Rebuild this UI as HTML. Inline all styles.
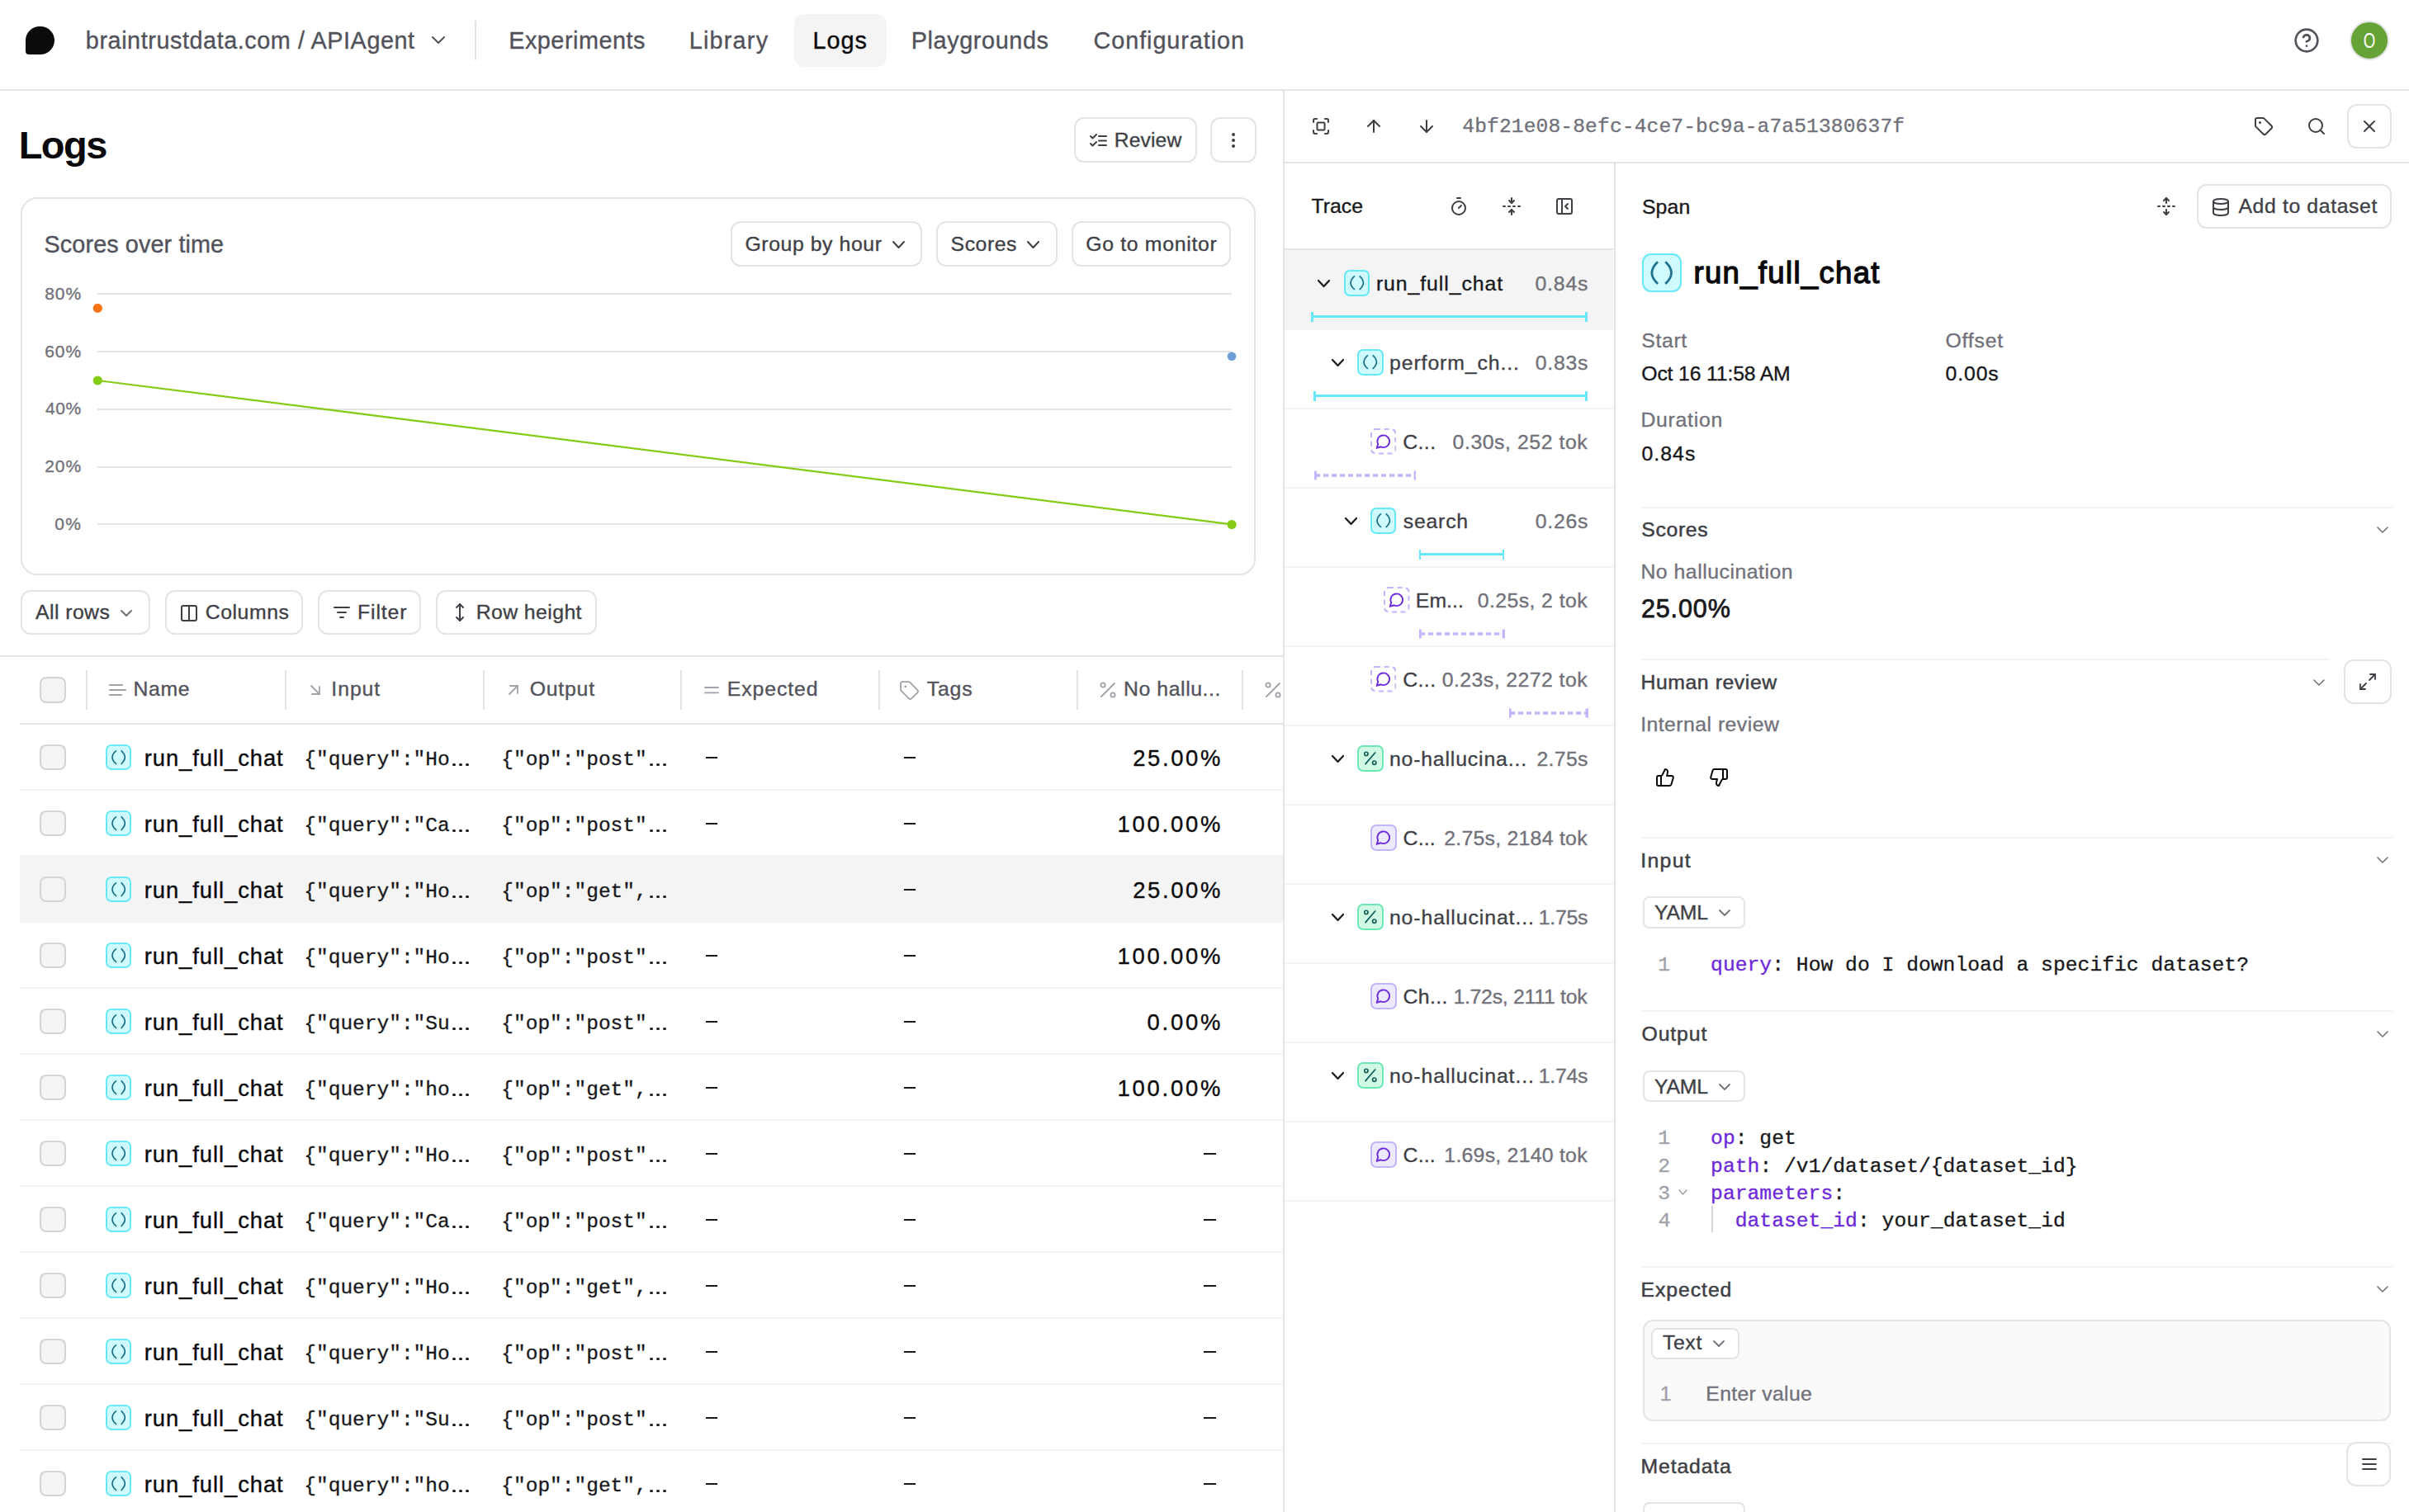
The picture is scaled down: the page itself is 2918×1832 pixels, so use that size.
<!DOCTYPE html><html><head><meta charset="utf-8"><style>
html,body{margin:0;padding:0}
body{width:2918px;height:1832px;overflow:hidden;position:relative;background:#fff;font-family:"Liberation Sans",sans-serif}
body>div,body>svg{position:absolute;box-sizing:border-box}
.t{white-space:nowrap}
</style></head><body>
<div style="left:31px;top:32px;width:35px;height:34px;background:#0b0b0b;border-radius:17px 17px 17px 4px"></div>
<div class="t" style="left:103.83px;top:34.52px;font-family:'Liberation Sans', sans-serif;font-size:28.8px;line-height:28.8px;font-weight:400;color:#52525b;letter-spacing:0.561px;-webkit-text-stroke:0.35px #52525b;">braintrustdata.com / APIAgent</div>
<svg style="left:520px;top:40px;width:22px;height:18px;" viewBox="0 0 22 18" fill="none" stroke="#52525b" stroke-width="2" stroke-linecap="round" stroke-linejoin="round"><path d="M4 5 L11 12 L18 5"/></svg>
<div style="left:575px;top:25px;width:2px;height:48px;background:#e4e4e7"></div>
<div style="left:962px;top:17px;width:112px;height:64px;background:#f4f4f5;border-radius:12px"></div>
<div class="t" style="left:616.20px;top:34.52px;font-family:'Liberation Sans', sans-serif;font-size:28.8px;line-height:28.8px;font-weight:400;color:#52525b;letter-spacing:0.518px;-webkit-text-stroke:0.35px #52525b;">Experiments</div>
<div class="t" style="left:834.70px;top:34.52px;font-family:'Liberation Sans', sans-serif;font-size:28.8px;line-height:28.8px;font-weight:400;color:#52525b;letter-spacing:1.220px;-webkit-text-stroke:0.35px #52525b;">Library</div>
<div class="t" style="left:984.50px;top:34.52px;font-family:'Liberation Sans', sans-serif;font-size:28.8px;line-height:28.8px;font-weight:400;color:#09090b;letter-spacing:1.005px;-webkit-text-stroke:0.35px #09090b;">Logs</div>
<div class="t" style="left:1103.70px;top:34.52px;font-family:'Liberation Sans', sans-serif;font-size:28.8px;line-height:28.8px;font-weight:400;color:#52525b;letter-spacing:0.618px;-webkit-text-stroke:0.35px #52525b;">Playgrounds</div>
<div class="t" style="left:1324.56px;top:34.52px;font-family:'Liberation Sans', sans-serif;font-size:28.8px;line-height:28.8px;font-weight:400;color:#52525b;letter-spacing:0.925px;-webkit-text-stroke:0.35px #52525b;">Configuration</div>
<svg style="left:2778px;top:33px;width:32px;height:32px;" viewBox="0 0 24 24" fill="none" stroke="#52525b" stroke-width="2" stroke-linecap="round" stroke-linejoin="round"><circle cx="12" cy="12" r="10"/><path d="M9.09 9a3 3 0 0 1 5.83 1c0 2-3 3-3 3"/><path d="M12 17h.01"/></svg>
<div style="left:2846px;top:25px;width:48px;height:48px;background:#66a336;border-radius:50%;border:2px solid #e4e4e7"></div>
<div class="t" style="left:2857px;top:36px;width:26px;text-align:center;font-size:26px;line-height:26px;color:#fff;transform:scaleX(0.72)">O</div>
<div style="left:0px;top:108px;width:2918px;height:2px;background:#e4e4e7"></div>
<div class="t" style="left:22.64px;top:152.05px;font-family:'Liberation Sans', sans-serif;font-size:47px;line-height:47px;font-weight:700;color:#09090b;letter-spacing:-1.465px;">Logs</div>
<div style="left:1300.5px;top:142.4px;width:149.0px;height:55.099999999999994px;border:2px solid #e4e4e7;border-radius:12px;background:#fff"></div>
<svg style="left:1318px;top:159px;width:24px;height:22px;" viewBox="0 0 24 22" fill="none" stroke="#3f3f46" stroke-width="2" stroke-linecap="round" stroke-linejoin="round"><path d="M3 6 L5.5 8.5 L10 4"/><path d="M3 15 L5.5 17.5 L10 13"/><path d="M13 6h9"/><path d="M13 11.5h9"/><path d="M13 17h9"/></svg>
<div class="t" style="left:1349.73px;top:157.99px;font-family:'Liberation Sans', sans-serif;font-size:24.6px;line-height:24.6px;font-weight:400;color:#3f3f46;letter-spacing:0.156px;-webkit-text-stroke:0.35px #3f3f46;">Review</div>
<div style="left:1466.2px;top:142.4px;width:55.399999999999864px;height:55.099999999999994px;border:2px solid #e4e4e7;border-radius:12px;background:#fff"></div>
<div style="left:1491.6px;top:160.5px;width:4.6px;height:4.6px;background:#3f3f46;border-radius:50%"></div>
<div style="left:1491.6px;top:167.5px;width:4.6px;height:4.6px;background:#3f3f46;border-radius:50%"></div>
<div style="left:1491.6px;top:174.6px;width:4.6px;height:4.6px;background:#3f3f46;border-radius:50%"></div>
<div style="left:24.5px;top:238.5px;width:1496.3px;height:458px;border:2px solid #e4e4e7;border-radius:20px"></div>
<div class="t" style="left:53.50px;top:281.92px;font-family:'Liberation Sans', sans-serif;font-size:28.8px;line-height:28.8px;font-weight:400;color:#52525b;letter-spacing:0.106px;-webkit-text-stroke:0.35px #52525b;">Scores over time</div>
<div style="left:885.4px;top:268.3px;width:232.0000000000001px;height:55.099999999999966px;border:2px solid #e4e4e7;border-radius:12px;background:#fff"></div>
<div class="t" style="left:902.46px;top:283.92px;font-family:'Liberation Sans', sans-serif;font-size:24.8px;line-height:24.8px;font-weight:400;color:#3f3f46;letter-spacing:0.578px;-webkit-text-stroke:0.35px #3f3f46;">Group by hour</div>
<svg style="left:1079.8px;top:290.5px;width:17px;height:11px;" viewBox="0 0 17 11" fill="none" stroke="#3f3f46" stroke-width="2" stroke-linecap="round" stroke-linejoin="round"><path d="M2 2 L8.5 9 L15 2"/></svg>
<div style="left:1134.3px;top:268.3px;width:147.10000000000014px;height:55.099999999999966px;border:2px solid #e4e4e7;border-radius:12px;background:#fff"></div>
<div class="t" style="left:1151.58px;top:283.92px;font-family:'Liberation Sans', sans-serif;font-size:24.8px;line-height:24.8px;font-weight:400;color:#3f3f46;letter-spacing:0.551px;-webkit-text-stroke:0.35px #3f3f46;">Scores</div>
<svg style="left:1243.1px;top:290.5px;width:17px;height:11px;" viewBox="0 0 17 11" fill="none" stroke="#3f3f46" stroke-width="2" stroke-linecap="round" stroke-linejoin="round"><path d="M2 2 L8.5 9 L15 2"/></svg>
<div style="left:1298.3px;top:268.3px;width:193.10000000000014px;height:55.099999999999966px;border:2px solid #e4e4e7;border-radius:12px;background:#fff"></div>
<div class="t" style="left:1315.16px;top:283.92px;font-family:'Liberation Sans', sans-serif;font-size:24.8px;line-height:24.8px;font-weight:400;color:#3f3f46;letter-spacing:0.696px;-webkit-text-stroke:0.35px #3f3f46;">Go to monitor</div>
<div style="left:118px;top:355.0px;width:1374px;height:2px;background:#e4e4e7"></div>
<div class="t" style="left:54.35px;top:344.65px;font-family:'Liberation Sans', sans-serif;font-size:21px;line-height:21px;font-weight:400;color:#71717a;letter-spacing:0.840px;-webkit-text-stroke:0.35px #71717a;">80%</div>
<div style="left:118px;top:424.85px;width:1374px;height:2px;background:#e4e4e7"></div>
<div class="t" style="left:54.25px;top:414.50px;font-family:'Liberation Sans', sans-serif;font-size:21px;line-height:21px;font-weight:400;color:#71717a;letter-spacing:0.893px;-webkit-text-stroke:0.35px #71717a;">60%</div>
<div style="left:118px;top:494.7px;width:1374px;height:2px;background:#e4e4e7"></div>
<div class="t" style="left:54.88px;top:484.35px;font-family:'Liberation Sans', sans-serif;font-size:21px;line-height:21px;font-weight:400;color:#71717a;letter-spacing:0.578px;-webkit-text-stroke:0.35px #71717a;">40%</div>
<div style="left:118px;top:564.55px;width:1374px;height:2px;background:#e4e4e7"></div>
<div class="t" style="left:54.25px;top:554.20px;font-family:'Liberation Sans', sans-serif;font-size:21px;line-height:21px;font-weight:400;color:#71717a;letter-spacing:0.893px;-webkit-text-stroke:0.35px #71717a;">20%</div>
<div style="left:118px;top:634.4px;width:1374px;height:2px;background:#e4e4e7"></div>
<div class="t" style="left:66.16px;top:624.05px;font-family:'Liberation Sans', sans-serif;font-size:21px;line-height:21px;font-weight:400;color:#71717a;letter-spacing:1.530px;-webkit-text-stroke:0.35px #71717a;">0%</div>
<svg style="left:0px;top:0px;width:1600px;height:700px;" viewBox="0 0 1600 700" fill="none" stroke="none" stroke-width="0" stroke-linecap="round" stroke-linejoin="round"><line x1="118.3" y1="461" x2="1492" y2="635.4" stroke="#84cc16" stroke-width="2.2"/><circle cx="118.3" cy="373.4" r="5.6" fill="#f97316" stroke="none"/><circle cx="118.3" cy="461" r="5.6" fill="#84cc16" stroke="none"/><circle cx="1492" cy="635.5" r="5.6" fill="#84cc16" stroke="none"/><circle cx="1492" cy="431.8" r="5.3" fill="#6c9fd6" stroke="none"/></svg>
<div style="left:24.6px;top:714.6px;width:157.70000000000002px;height:54.39999999999998px;border:2px solid #e4e4e7;border-radius:12px;background:#fff"></div>
<div class="t" style="left:43.00px;top:730.12px;font-family:'Liberation Sans', sans-serif;font-size:24.8px;line-height:24.8px;font-weight:400;color:#3f3f46;letter-spacing:0.438px;-webkit-text-stroke:0.35px #3f3f46;">All rows</div>
<svg style="left:145.0px;top:737.5px;width:16px;height:10px;" viewBox="0 0 16 10" fill="none" stroke="#71717a" stroke-width="2" stroke-linecap="round" stroke-linejoin="round"><path d="M2 2 L8.0 8 L14 2"/></svg>
<div style="left:199.8px;top:714.6px;width:167.09999999999997px;height:54.39999999999998px;border:2px solid #e4e4e7;border-radius:12px;background:#fff"></div>
<svg style="left:217px;top:730.5px;width:24px;height:24px;" viewBox="0 0 24 24" fill="none" stroke="#3f3f46" stroke-width="2" stroke-linecap="round" stroke-linejoin="round"><rect x="3" y="3" width="18" height="18" rx="2"/><path d="M12 3v18"/></svg>
<div class="t" style="left:248.76px;top:730.12px;font-family:'Liberation Sans', sans-serif;font-size:24.8px;line-height:24.8px;font-weight:400;color:#3f3f46;letter-spacing:0.545px;-webkit-text-stroke:0.35px #3f3f46;">Columns</div>
<div style="left:384.7px;top:714.6px;width:125.69999999999999px;height:54.39999999999998px;border:2px solid #e4e4e7;border-radius:12px;background:#fff"></div>
<svg style="left:402px;top:730px;width:24px;height:24px;" viewBox="0 0 24 24" fill="none" stroke="#3f3f46" stroke-width="2" stroke-linecap="round" stroke-linejoin="round"><path d="M3 6h18"/><path d="M7 12h10"/><path d="M10 18h4"/></svg>
<div class="t" style="left:433.02px;top:730.12px;font-family:'Liberation Sans', sans-serif;font-size:24.8px;line-height:24.8px;font-weight:400;color:#3f3f46;letter-spacing:0.860px;-webkit-text-stroke:0.35px #3f3f46;">Filter</div>
<div style="left:527.8px;top:714.6px;width:195.30000000000007px;height:54.39999999999998px;border:2px solid #e4e4e7;border-radius:12px;background:#fff"></div>
<svg style="left:545px;top:730px;width:24px;height:24px;" viewBox="0 0 24 24" fill="none" stroke="#3f3f46" stroke-width="2" stroke-linecap="round" stroke-linejoin="round"><path d="M12 2v20"/><path d="m8 6 4-4 4 4"/><path d="m8 18 4 4 4-4"/></svg>
<div class="t" style="left:576.72px;top:730.12px;font-family:'Liberation Sans', sans-serif;font-size:24.8px;line-height:24.8px;font-weight:400;color:#3f3f46;letter-spacing:0.412px;-webkit-text-stroke:0.35px #3f3f46;">Row height</div>
<div style="left:0px;top:794px;width:1554px;height:2px;background:#e4e4e7"></div>
<div style="left:48.4px;top:820.3px;width:31.199999999999996px;height:31.300000000000068px;border:2px solid #d4d4d8;border-radius:8px;background:#f4f4f5"></div>
<div style="left:104px;top:812px;width:2px;height:48px;background:#e4e4e7"></div>
<div style="left:344.5px;top:812px;width:2px;height:48px;background:#e4e4e7"></div>
<div style="left:584.5px;top:812px;width:2px;height:48px;background:#e4e4e7"></div>
<div style="left:824px;top:812px;width:2px;height:48px;background:#e4e4e7"></div>
<div style="left:1064px;top:812px;width:2px;height:48px;background:#e4e4e7"></div>
<div style="left:1304px;top:812px;width:2px;height:48px;background:#e4e4e7"></div>
<div style="left:1504px;top:812px;width:2px;height:48px;background:#e4e4e7"></div>
<svg style="left:130px;top:826px;width:24px;height:20px;" viewBox="0 0 24 20" fill="none" stroke="#a1a1aa" stroke-width="2" stroke-linecap="round" stroke-linejoin="round"><path d="M3 4h15"/><path d="M3 10h19"/><path d="M3 16h14"/></svg>
<div class="t" style="left:161.42px;top:822.72px;font-family:'Liberation Sans', sans-serif;font-size:24.8px;line-height:24.8px;font-weight:400;color:#52525b;letter-spacing:0.669px;-webkit-text-stroke:0.35px #52525b;">Name</div>
<svg style="left:374px;top:828px;width:16px;height:16px;" viewBox="0 0 16 16" fill="none" stroke="#a1a1aa" stroke-width="1.8" stroke-linecap="round" stroke-linejoin="round"><path d="M3 3 L13 13"/><path d="M13 4 V13 H4"/></svg>
<div class="t" style="left:401.37px;top:822.92px;font-family:'Liberation Sans', sans-serif;font-size:24.8px;line-height:24.8px;font-weight:400;color:#52525b;letter-spacing:0.925px;-webkit-text-stroke:0.35px #52525b;">Input</div>
<svg style="left:614px;top:828px;width:16px;height:16px;" viewBox="0 0 16 16" fill="none" stroke="#a1a1aa" stroke-width="1.8" stroke-linecap="round" stroke-linejoin="round"><path d="M3 13 L13 3"/><path d="M4 3 H13 V12"/></svg>
<div class="t" style="left:641.68px;top:822.92px;font-family:'Liberation Sans', sans-serif;font-size:24.8px;line-height:24.8px;font-weight:400;color:#52525b;letter-spacing:0.788px;-webkit-text-stroke:0.35px #52525b;">Output</div>
<svg style="left:852px;top:828px;width:20px;height:16px;" viewBox="0 0 20 16" fill="none" stroke="#a1a1aa" stroke-width="1.8" stroke-linecap="round" stroke-linejoin="round"><path d="M2 5h16"/><path d="M2 11.3h16"/></svg>
<div class="t" style="left:880.72px;top:822.92px;font-family:'Liberation Sans', sans-serif;font-size:24.8px;line-height:24.8px;font-weight:400;color:#52525b;letter-spacing:0.911px;-webkit-text-stroke:0.35px #52525b;">Expected</div>
<svg style="left:1089px;top:824px;width:25px;height:25px;" viewBox="0 0 24 24" fill="none" stroke="#a1a1aa" stroke-width="1.7" stroke-linecap="round" stroke-linejoin="round"><path d="M12.586 2.586A2 2 0 0 0 11.172 2H4a2 2 0 0 0-2 2v7.172a2 2 0 0 0 .586 1.414l8.704 8.704a2.426 2.426 0 0 0 3.42 0l6.58-6.58a2.426 2.426 0 0 0 0-3.42z"/><circle cx="7.5" cy="7.5" r=".5" fill="currentColor"/></svg>
<div class="t" style="left:1122.80px;top:822.92px;font-family:'Liberation Sans', sans-serif;font-size:24.8px;line-height:24.8px;font-weight:400;color:#52525b;letter-spacing:0.812px;-webkit-text-stroke:0.35px #52525b;">Tags</div>
<svg style="left:1331px;top:825px;width:22px;height:22px;" viewBox="0 0 22 22" fill="none" stroke="#a1a1aa" stroke-width="1.8" stroke-linecap="round" stroke-linejoin="round"><circle cx="5" cy="5" r="2.6"/><circle cx="17" cy="17" r="2.6"/><path d="M19 3 L3 19"/></svg>
<svg style="left:1531px;top:825px;width:22px;height:22px;" viewBox="0 0 22 22" fill="none" stroke="#a1a1aa" stroke-width="1.8" stroke-linecap="round" stroke-linejoin="round"><circle cx="5" cy="5" r="2.6"/><circle cx="17" cy="17" r="2.6"/><path d="M19 3 L3 19"/></svg>
<div class="t" style="left:1360.92px;top:822.92px;font-family:'Liberation Sans', sans-serif;font-size:24.8px;line-height:24.8px;font-weight:400;color:#52525b;letter-spacing:0.592px;-webkit-text-stroke:0.35px #52525b;">No hallu...</div>
<div style="left:24px;top:876px;width:1530px;height:2px;background:#e4e4e7"></div>
<div style="left:24px;top:956px;width:1530px;height:2px;background:#f4f4f5"></div>
<div style="left:48.4px;top:901.9px;width:31.199999999999996px;height:31.200000000000045px;border:2px solid #d4d4d8;border-radius:8px;background:#f4f4f5"></div>
<div style="left:128.2px;top:901.9px;width:31.3px;height:31.3px;border:2px solid #67e8f9;background:#cffafe;border-radius:6.9px"></div>
<svg style="left:128.2px;top:901.9px;width:31.3px;height:31.3px;stroke-linecap:butt" viewBox="0 0 31.3 31.3" fill="none" stroke="#1a6f85" stroke-width="1.7" stroke-linecap="round" stroke-linejoin="round"><path d="M12.9 7.4 Q3.1 15.6 12.9 23.8"/><path d="M18.6 7.4 Q28.0 15.6 18.6 23.8"/></svg>
<div class="t" style="left:174.72px;top:904.71px;font-family:'Liberation Sans', sans-serif;font-size:27.4px;line-height:27.4px;font-weight:400;color:#09090b;letter-spacing:0.929px;-webkit-text-stroke:0.35px #09090b;">run_full_chat</div>
<div style="left:548.40px;top:924.80px;width:3.2px;height:3.2px;border-radius:50%;background:#18181b"></div>
<div style="left:556.40px;top:924.80px;width:3.2px;height:3.2px;border-radius:50%;background:#18181b"></div>
<div style="left:564.40px;top:924.80px;width:3.2px;height:3.2px;border-radius:50%;background:#18181b"></div>
<div class="t" style="left:368.31px;top:909.38px;font-family:'Liberation Mono', monospace;font-size:24.5px;line-height:24.5px;font-weight:400;color:#18181b;letter-spacing:0.000px;-webkit-text-stroke:0.3px #18181b;">{&quot;query&quot;:&quot;Ho </div>
<div style="left:787.40px;top:924.80px;width:3.2px;height:3.2px;border-radius:50%;background:#18181b"></div>
<div style="left:795.40px;top:924.80px;width:3.2px;height:3.2px;border-radius:50%;background:#18181b"></div>
<div style="left:803.40px;top:924.80px;width:3.2px;height:3.2px;border-radius:50%;background:#18181b"></div>
<div class="t" style="left:607.30px;top:909.38px;font-family:'Liberation Mono', monospace;font-size:24.5px;line-height:24.5px;font-weight:400;color:#18181b;letter-spacing:0.000px;-webkit-text-stroke:0.3px #18181b;">{&quot;op&quot;:&quot;post&quot; </div>
<div style="left:854.5px;top:916.5px;width:14.5px;height:2px;background:#18181b"></div>
<div style="left:1094.8px;top:916.5px;width:14.5px;height:2px;background:#18181b"></div>
<div class="t" style="left:1372.23px;top:904.71px;font-family:'Liberation Sans', sans-serif;font-size:27.4px;line-height:27.4px;font-weight:400;color:#09090b;letter-spacing:2.641px;-webkit-text-stroke:0.35px #09090b;">25.00%</div>
<div style="left:48.4px;top:981.9px;width:31.199999999999996px;height:31.200000000000045px;border:2px solid #d4d4d8;border-radius:8px;background:#f4f4f5"></div>
<div style="left:128.2px;top:981.9px;width:31.3px;height:31.3px;border:2px solid #67e8f9;background:#cffafe;border-radius:6.9px"></div>
<svg style="left:128.2px;top:981.9px;width:31.3px;height:31.3px;stroke-linecap:butt" viewBox="0 0 31.3 31.3" fill="none" stroke="#1a6f85" stroke-width="1.7" stroke-linecap="round" stroke-linejoin="round"><path d="M12.9 7.4 Q3.1 15.6 12.9 23.8"/><path d="M18.6 7.4 Q28.0 15.6 18.6 23.8"/></svg>
<div class="t" style="left:174.72px;top:984.71px;font-family:'Liberation Sans', sans-serif;font-size:27.4px;line-height:27.4px;font-weight:400;color:#09090b;letter-spacing:0.929px;-webkit-text-stroke:0.35px #09090b;">run_full_chat</div>
<div style="left:548.40px;top:1004.80px;width:3.2px;height:3.2px;border-radius:50%;background:#18181b"></div>
<div style="left:556.40px;top:1004.80px;width:3.2px;height:3.2px;border-radius:50%;background:#18181b"></div>
<div style="left:564.40px;top:1004.80px;width:3.2px;height:3.2px;border-radius:50%;background:#18181b"></div>
<div class="t" style="left:368.31px;top:989.38px;font-family:'Liberation Mono', monospace;font-size:24.5px;line-height:24.5px;font-weight:400;color:#18181b;letter-spacing:0.000px;-webkit-text-stroke:0.3px #18181b;">{&quot;query&quot;:&quot;Ca </div>
<div style="left:787.40px;top:1004.80px;width:3.2px;height:3.2px;border-radius:50%;background:#18181b"></div>
<div style="left:795.40px;top:1004.80px;width:3.2px;height:3.2px;border-radius:50%;background:#18181b"></div>
<div style="left:803.40px;top:1004.80px;width:3.2px;height:3.2px;border-radius:50%;background:#18181b"></div>
<div class="t" style="left:607.30px;top:989.38px;font-family:'Liberation Mono', monospace;font-size:24.5px;line-height:24.5px;font-weight:400;color:#18181b;letter-spacing:0.000px;-webkit-text-stroke:0.3px #18181b;">{&quot;op&quot;:&quot;post&quot; </div>
<div style="left:854.5px;top:996.5px;width:14.5px;height:2px;background:#18181b"></div>
<div style="left:1094.8px;top:996.5px;width:14.5px;height:2px;background:#18181b"></div>
<div class="t" style="left:1353.44px;top:984.71px;font-family:'Liberation Sans', sans-serif;font-size:27.4px;line-height:27.4px;font-weight:400;color:#09090b;letter-spacing:2.797px;-webkit-text-stroke:0.35px #09090b;">100.00%</div>
<div style="left:24px;top:1036px;width:1530px;height:82px;background:#f4f4f5"></div>
<div style="left:48.4px;top:1061.9px;width:31.199999999999996px;height:31.199999999999818px;border:2px solid #d4d4d8;border-radius:8px;background:#f4f4f5"></div>
<div style="left:128.2px;top:1061.9px;width:31.3px;height:31.3px;border:2px solid #67e8f9;background:#cffafe;border-radius:6.9px"></div>
<svg style="left:128.2px;top:1061.9px;width:31.3px;height:31.3px;stroke-linecap:butt" viewBox="0 0 31.3 31.3" fill="none" stroke="#1a6f85" stroke-width="1.7" stroke-linecap="round" stroke-linejoin="round"><path d="M12.9 7.4 Q3.1 15.6 12.9 23.8"/><path d="M18.6 7.4 Q28.0 15.6 18.6 23.8"/></svg>
<div class="t" style="left:174.72px;top:1064.71px;font-family:'Liberation Sans', sans-serif;font-size:27.4px;line-height:27.4px;font-weight:400;color:#09090b;letter-spacing:0.929px;-webkit-text-stroke:0.35px #09090b;">run_full_chat</div>
<div style="left:548.40px;top:1084.80px;width:3.2px;height:3.2px;border-radius:50%;background:#18181b"></div>
<div style="left:556.40px;top:1084.80px;width:3.2px;height:3.2px;border-radius:50%;background:#18181b"></div>
<div style="left:564.40px;top:1084.80px;width:3.2px;height:3.2px;border-radius:50%;background:#18181b"></div>
<div class="t" style="left:368.31px;top:1069.38px;font-family:'Liberation Mono', monospace;font-size:24.5px;line-height:24.5px;font-weight:400;color:#18181b;letter-spacing:0.000px;-webkit-text-stroke:0.3px #18181b;">{&quot;query&quot;:&quot;Ho </div>
<div style="left:787.40px;top:1084.80px;width:3.2px;height:3.2px;border-radius:50%;background:#18181b"></div>
<div style="left:795.40px;top:1084.80px;width:3.2px;height:3.2px;border-radius:50%;background:#18181b"></div>
<div style="left:803.40px;top:1084.80px;width:3.2px;height:3.2px;border-radius:50%;background:#18181b"></div>
<div class="t" style="left:607.30px;top:1069.38px;font-family:'Liberation Mono', monospace;font-size:24.5px;line-height:24.5px;font-weight:400;color:#18181b;letter-spacing:0.000px;-webkit-text-stroke:0.3px #18181b;">{&quot;op&quot;:&quot;get&quot;, </div>
<div style="left:1094.8px;top:1076.5px;width:14.5px;height:2px;background:#18181b"></div>
<div class="t" style="left:1372.23px;top:1064.71px;font-family:'Liberation Sans', sans-serif;font-size:27.4px;line-height:27.4px;font-weight:400;color:#09090b;letter-spacing:2.641px;-webkit-text-stroke:0.35px #09090b;">25.00%</div>
<div style="left:24px;top:1196px;width:1530px;height:2px;background:#f4f4f5"></div>
<div style="left:48.4px;top:1141.9px;width:31.199999999999996px;height:31.199999999999818px;border:2px solid #d4d4d8;border-radius:8px;background:#f4f4f5"></div>
<div style="left:128.2px;top:1141.9px;width:31.3px;height:31.3px;border:2px solid #67e8f9;background:#cffafe;border-radius:6.9px"></div>
<svg style="left:128.2px;top:1141.9px;width:31.3px;height:31.3px;stroke-linecap:butt" viewBox="0 0 31.3 31.3" fill="none" stroke="#1a6f85" stroke-width="1.7" stroke-linecap="round" stroke-linejoin="round"><path d="M12.9 7.4 Q3.1 15.6 12.9 23.8"/><path d="M18.6 7.4 Q28.0 15.6 18.6 23.8"/></svg>
<div class="t" style="left:174.72px;top:1144.71px;font-family:'Liberation Sans', sans-serif;font-size:27.4px;line-height:27.4px;font-weight:400;color:#09090b;letter-spacing:0.929px;-webkit-text-stroke:0.35px #09090b;">run_full_chat</div>
<div style="left:548.40px;top:1164.80px;width:3.2px;height:3.2px;border-radius:50%;background:#18181b"></div>
<div style="left:556.40px;top:1164.80px;width:3.2px;height:3.2px;border-radius:50%;background:#18181b"></div>
<div style="left:564.40px;top:1164.80px;width:3.2px;height:3.2px;border-radius:50%;background:#18181b"></div>
<div class="t" style="left:368.31px;top:1149.38px;font-family:'Liberation Mono', monospace;font-size:24.5px;line-height:24.5px;font-weight:400;color:#18181b;letter-spacing:0.000px;-webkit-text-stroke:0.3px #18181b;">{&quot;query&quot;:&quot;Ho </div>
<div style="left:787.40px;top:1164.80px;width:3.2px;height:3.2px;border-radius:50%;background:#18181b"></div>
<div style="left:795.40px;top:1164.80px;width:3.2px;height:3.2px;border-radius:50%;background:#18181b"></div>
<div style="left:803.40px;top:1164.80px;width:3.2px;height:3.2px;border-radius:50%;background:#18181b"></div>
<div class="t" style="left:607.30px;top:1149.38px;font-family:'Liberation Mono', monospace;font-size:24.5px;line-height:24.5px;font-weight:400;color:#18181b;letter-spacing:0.000px;-webkit-text-stroke:0.3px #18181b;">{&quot;op&quot;:&quot;post&quot; </div>
<div style="left:854.5px;top:1156.5px;width:14.5px;height:2px;background:#18181b"></div>
<div style="left:1094.8px;top:1156.5px;width:14.5px;height:2px;background:#18181b"></div>
<div class="t" style="left:1353.44px;top:1144.71px;font-family:'Liberation Sans', sans-serif;font-size:27.4px;line-height:27.4px;font-weight:400;color:#09090b;letter-spacing:2.797px;-webkit-text-stroke:0.35px #09090b;">100.00%</div>
<div style="left:24px;top:1276px;width:1530px;height:2px;background:#f4f4f5"></div>
<div style="left:48.4px;top:1221.9px;width:31.199999999999996px;height:31.199999999999818px;border:2px solid #d4d4d8;border-radius:8px;background:#f4f4f5"></div>
<div style="left:128.2px;top:1221.9px;width:31.3px;height:31.3px;border:2px solid #67e8f9;background:#cffafe;border-radius:6.9px"></div>
<svg style="left:128.2px;top:1221.9px;width:31.3px;height:31.3px;stroke-linecap:butt" viewBox="0 0 31.3 31.3" fill="none" stroke="#1a6f85" stroke-width="1.7" stroke-linecap="round" stroke-linejoin="round"><path d="M12.9 7.4 Q3.1 15.6 12.9 23.8"/><path d="M18.6 7.4 Q28.0 15.6 18.6 23.8"/></svg>
<div class="t" style="left:174.72px;top:1224.71px;font-family:'Liberation Sans', sans-serif;font-size:27.4px;line-height:27.4px;font-weight:400;color:#09090b;letter-spacing:0.929px;-webkit-text-stroke:0.35px #09090b;">run_full_chat</div>
<div style="left:548.40px;top:1244.80px;width:3.2px;height:3.2px;border-radius:50%;background:#18181b"></div>
<div style="left:556.40px;top:1244.80px;width:3.2px;height:3.2px;border-radius:50%;background:#18181b"></div>
<div style="left:564.40px;top:1244.80px;width:3.2px;height:3.2px;border-radius:50%;background:#18181b"></div>
<div class="t" style="left:368.31px;top:1229.38px;font-family:'Liberation Mono', monospace;font-size:24.5px;line-height:24.5px;font-weight:400;color:#18181b;letter-spacing:0.000px;-webkit-text-stroke:0.3px #18181b;">{&quot;query&quot;:&quot;Su </div>
<div style="left:787.40px;top:1244.80px;width:3.2px;height:3.2px;border-radius:50%;background:#18181b"></div>
<div style="left:795.40px;top:1244.80px;width:3.2px;height:3.2px;border-radius:50%;background:#18181b"></div>
<div style="left:803.40px;top:1244.80px;width:3.2px;height:3.2px;border-radius:50%;background:#18181b"></div>
<div class="t" style="left:607.30px;top:1229.38px;font-family:'Liberation Mono', monospace;font-size:24.5px;line-height:24.5px;font-weight:400;color:#18181b;letter-spacing:0.000px;-webkit-text-stroke:0.3px #18181b;">{&quot;op&quot;:&quot;post&quot; </div>
<div style="left:854.5px;top:1236.5px;width:14.5px;height:2px;background:#18181b"></div>
<div style="left:1094.8px;top:1236.5px;width:14.5px;height:2px;background:#18181b"></div>
<div class="t" style="left:1389.40px;top:1224.71px;font-family:'Liberation Sans', sans-serif;font-size:27.4px;line-height:27.4px;font-weight:400;color:#09090b;letter-spacing:2.844px;-webkit-text-stroke:0.35px #09090b;">0.00%</div>
<div style="left:24px;top:1356px;width:1530px;height:2px;background:#f4f4f5"></div>
<div style="left:48.4px;top:1301.9px;width:31.199999999999996px;height:31.199999999999818px;border:2px solid #d4d4d8;border-radius:8px;background:#f4f4f5"></div>
<div style="left:128.2px;top:1301.9px;width:31.3px;height:31.3px;border:2px solid #67e8f9;background:#cffafe;border-radius:6.9px"></div>
<svg style="left:128.2px;top:1301.9px;width:31.3px;height:31.3px;stroke-linecap:butt" viewBox="0 0 31.3 31.3" fill="none" stroke="#1a6f85" stroke-width="1.7" stroke-linecap="round" stroke-linejoin="round"><path d="M12.9 7.4 Q3.1 15.6 12.9 23.8"/><path d="M18.6 7.4 Q28.0 15.6 18.6 23.8"/></svg>
<div class="t" style="left:174.72px;top:1304.71px;font-family:'Liberation Sans', sans-serif;font-size:27.4px;line-height:27.4px;font-weight:400;color:#09090b;letter-spacing:0.929px;-webkit-text-stroke:0.35px #09090b;">run_full_chat</div>
<div style="left:548.40px;top:1324.80px;width:3.2px;height:3.2px;border-radius:50%;background:#18181b"></div>
<div style="left:556.40px;top:1324.80px;width:3.2px;height:3.2px;border-radius:50%;background:#18181b"></div>
<div style="left:564.40px;top:1324.80px;width:3.2px;height:3.2px;border-radius:50%;background:#18181b"></div>
<div class="t" style="left:368.31px;top:1309.38px;font-family:'Liberation Mono', monospace;font-size:24.5px;line-height:24.5px;font-weight:400;color:#18181b;letter-spacing:0.000px;-webkit-text-stroke:0.3px #18181b;">{&quot;query&quot;:&quot;ho </div>
<div style="left:787.40px;top:1324.80px;width:3.2px;height:3.2px;border-radius:50%;background:#18181b"></div>
<div style="left:795.40px;top:1324.80px;width:3.2px;height:3.2px;border-radius:50%;background:#18181b"></div>
<div style="left:803.40px;top:1324.80px;width:3.2px;height:3.2px;border-radius:50%;background:#18181b"></div>
<div class="t" style="left:607.30px;top:1309.38px;font-family:'Liberation Mono', monospace;font-size:24.5px;line-height:24.5px;font-weight:400;color:#18181b;letter-spacing:0.000px;-webkit-text-stroke:0.3px #18181b;">{&quot;op&quot;:&quot;get&quot;, </div>
<div style="left:854.5px;top:1316.5px;width:14.5px;height:2px;background:#18181b"></div>
<div style="left:1094.8px;top:1316.5px;width:14.5px;height:2px;background:#18181b"></div>
<div class="t" style="left:1353.44px;top:1304.71px;font-family:'Liberation Sans', sans-serif;font-size:27.4px;line-height:27.4px;font-weight:400;color:#09090b;letter-spacing:2.797px;-webkit-text-stroke:0.35px #09090b;">100.00%</div>
<div style="left:24px;top:1436px;width:1530px;height:2px;background:#f4f4f5"></div>
<div style="left:48.4px;top:1381.9px;width:31.199999999999996px;height:31.199999999999818px;border:2px solid #d4d4d8;border-radius:8px;background:#f4f4f5"></div>
<div style="left:128.2px;top:1381.9px;width:31.3px;height:31.3px;border:2px solid #67e8f9;background:#cffafe;border-radius:6.9px"></div>
<svg style="left:128.2px;top:1381.9px;width:31.3px;height:31.3px;stroke-linecap:butt" viewBox="0 0 31.3 31.3" fill="none" stroke="#1a6f85" stroke-width="1.7" stroke-linecap="round" stroke-linejoin="round"><path d="M12.9 7.4 Q3.1 15.6 12.9 23.8"/><path d="M18.6 7.4 Q28.0 15.6 18.6 23.8"/></svg>
<div class="t" style="left:174.72px;top:1384.71px;font-family:'Liberation Sans', sans-serif;font-size:27.4px;line-height:27.4px;font-weight:400;color:#09090b;letter-spacing:0.929px;-webkit-text-stroke:0.35px #09090b;">run_full_chat</div>
<div style="left:548.40px;top:1404.80px;width:3.2px;height:3.2px;border-radius:50%;background:#18181b"></div>
<div style="left:556.40px;top:1404.80px;width:3.2px;height:3.2px;border-radius:50%;background:#18181b"></div>
<div style="left:564.40px;top:1404.80px;width:3.2px;height:3.2px;border-radius:50%;background:#18181b"></div>
<div class="t" style="left:368.31px;top:1389.38px;font-family:'Liberation Mono', monospace;font-size:24.5px;line-height:24.5px;font-weight:400;color:#18181b;letter-spacing:0.000px;-webkit-text-stroke:0.3px #18181b;">{&quot;query&quot;:&quot;Ho </div>
<div style="left:787.40px;top:1404.80px;width:3.2px;height:3.2px;border-radius:50%;background:#18181b"></div>
<div style="left:795.40px;top:1404.80px;width:3.2px;height:3.2px;border-radius:50%;background:#18181b"></div>
<div style="left:803.40px;top:1404.80px;width:3.2px;height:3.2px;border-radius:50%;background:#18181b"></div>
<div class="t" style="left:607.30px;top:1389.38px;font-family:'Liberation Mono', monospace;font-size:24.5px;line-height:24.5px;font-weight:400;color:#18181b;letter-spacing:0.000px;-webkit-text-stroke:0.3px #18181b;">{&quot;op&quot;:&quot;post&quot; </div>
<div style="left:854.5px;top:1396.5px;width:14.5px;height:2px;background:#18181b"></div>
<div style="left:1094.8px;top:1396.5px;width:14.5px;height:2px;background:#18181b"></div>
<div style="left:1458px;top:1396.5px;width:15px;height:2px;background:#18181b"></div>
<div style="left:24px;top:1516px;width:1530px;height:2px;background:#f4f4f5"></div>
<div style="left:48.4px;top:1461.9px;width:31.199999999999996px;height:31.199999999999818px;border:2px solid #d4d4d8;border-radius:8px;background:#f4f4f5"></div>
<div style="left:128.2px;top:1461.9px;width:31.3px;height:31.3px;border:2px solid #67e8f9;background:#cffafe;border-radius:6.9px"></div>
<svg style="left:128.2px;top:1461.9px;width:31.3px;height:31.3px;stroke-linecap:butt" viewBox="0 0 31.3 31.3" fill="none" stroke="#1a6f85" stroke-width="1.7" stroke-linecap="round" stroke-linejoin="round"><path d="M12.9 7.4 Q3.1 15.6 12.9 23.8"/><path d="M18.6 7.4 Q28.0 15.6 18.6 23.8"/></svg>
<div class="t" style="left:174.72px;top:1464.71px;font-family:'Liberation Sans', sans-serif;font-size:27.4px;line-height:27.4px;font-weight:400;color:#09090b;letter-spacing:0.929px;-webkit-text-stroke:0.35px #09090b;">run_full_chat</div>
<div style="left:548.40px;top:1484.80px;width:3.2px;height:3.2px;border-radius:50%;background:#18181b"></div>
<div style="left:556.40px;top:1484.80px;width:3.2px;height:3.2px;border-radius:50%;background:#18181b"></div>
<div style="left:564.40px;top:1484.80px;width:3.2px;height:3.2px;border-radius:50%;background:#18181b"></div>
<div class="t" style="left:368.31px;top:1469.38px;font-family:'Liberation Mono', monospace;font-size:24.5px;line-height:24.5px;font-weight:400;color:#18181b;letter-spacing:0.000px;-webkit-text-stroke:0.3px #18181b;">{&quot;query&quot;:&quot;Ca </div>
<div style="left:787.40px;top:1484.80px;width:3.2px;height:3.2px;border-radius:50%;background:#18181b"></div>
<div style="left:795.40px;top:1484.80px;width:3.2px;height:3.2px;border-radius:50%;background:#18181b"></div>
<div style="left:803.40px;top:1484.80px;width:3.2px;height:3.2px;border-radius:50%;background:#18181b"></div>
<div class="t" style="left:607.30px;top:1469.38px;font-family:'Liberation Mono', monospace;font-size:24.5px;line-height:24.5px;font-weight:400;color:#18181b;letter-spacing:0.000px;-webkit-text-stroke:0.3px #18181b;">{&quot;op&quot;:&quot;post&quot; </div>
<div style="left:854.5px;top:1476.5px;width:14.5px;height:2px;background:#18181b"></div>
<div style="left:1094.8px;top:1476.5px;width:14.5px;height:2px;background:#18181b"></div>
<div style="left:1458px;top:1476.5px;width:15px;height:2px;background:#18181b"></div>
<div style="left:24px;top:1596px;width:1530px;height:2px;background:#f4f4f5"></div>
<div style="left:48.4px;top:1541.9px;width:31.199999999999996px;height:31.199999999999818px;border:2px solid #d4d4d8;border-radius:8px;background:#f4f4f5"></div>
<div style="left:128.2px;top:1541.9px;width:31.3px;height:31.3px;border:2px solid #67e8f9;background:#cffafe;border-radius:6.9px"></div>
<svg style="left:128.2px;top:1541.9px;width:31.3px;height:31.3px;stroke-linecap:butt" viewBox="0 0 31.3 31.3" fill="none" stroke="#1a6f85" stroke-width="1.7" stroke-linecap="round" stroke-linejoin="round"><path d="M12.9 7.4 Q3.1 15.6 12.9 23.8"/><path d="M18.6 7.4 Q28.0 15.6 18.6 23.8"/></svg>
<div class="t" style="left:174.72px;top:1544.71px;font-family:'Liberation Sans', sans-serif;font-size:27.4px;line-height:27.4px;font-weight:400;color:#09090b;letter-spacing:0.929px;-webkit-text-stroke:0.35px #09090b;">run_full_chat</div>
<div style="left:548.40px;top:1564.80px;width:3.2px;height:3.2px;border-radius:50%;background:#18181b"></div>
<div style="left:556.40px;top:1564.80px;width:3.2px;height:3.2px;border-radius:50%;background:#18181b"></div>
<div style="left:564.40px;top:1564.80px;width:3.2px;height:3.2px;border-radius:50%;background:#18181b"></div>
<div class="t" style="left:368.31px;top:1549.38px;font-family:'Liberation Mono', monospace;font-size:24.5px;line-height:24.5px;font-weight:400;color:#18181b;letter-spacing:0.000px;-webkit-text-stroke:0.3px #18181b;">{&quot;query&quot;:&quot;Ho </div>
<div style="left:787.40px;top:1564.80px;width:3.2px;height:3.2px;border-radius:50%;background:#18181b"></div>
<div style="left:795.40px;top:1564.80px;width:3.2px;height:3.2px;border-radius:50%;background:#18181b"></div>
<div style="left:803.40px;top:1564.80px;width:3.2px;height:3.2px;border-radius:50%;background:#18181b"></div>
<div class="t" style="left:607.30px;top:1549.38px;font-family:'Liberation Mono', monospace;font-size:24.5px;line-height:24.5px;font-weight:400;color:#18181b;letter-spacing:0.000px;-webkit-text-stroke:0.3px #18181b;">{&quot;op&quot;:&quot;get&quot;, </div>
<div style="left:854.5px;top:1556.5px;width:14.5px;height:2px;background:#18181b"></div>
<div style="left:1094.8px;top:1556.5px;width:14.5px;height:2px;background:#18181b"></div>
<div style="left:1458px;top:1556.5px;width:15px;height:2px;background:#18181b"></div>
<div style="left:24px;top:1676px;width:1530px;height:2px;background:#f4f4f5"></div>
<div style="left:48.4px;top:1621.9px;width:31.199999999999996px;height:31.199999999999818px;border:2px solid #d4d4d8;border-radius:8px;background:#f4f4f5"></div>
<div style="left:128.2px;top:1621.9px;width:31.3px;height:31.3px;border:2px solid #67e8f9;background:#cffafe;border-radius:6.9px"></div>
<svg style="left:128.2px;top:1621.9px;width:31.3px;height:31.3px;stroke-linecap:butt" viewBox="0 0 31.3 31.3" fill="none" stroke="#1a6f85" stroke-width="1.7" stroke-linecap="round" stroke-linejoin="round"><path d="M12.9 7.4 Q3.1 15.6 12.9 23.8"/><path d="M18.6 7.4 Q28.0 15.6 18.6 23.8"/></svg>
<div class="t" style="left:174.72px;top:1624.71px;font-family:'Liberation Sans', sans-serif;font-size:27.4px;line-height:27.4px;font-weight:400;color:#09090b;letter-spacing:0.929px;-webkit-text-stroke:0.35px #09090b;">run_full_chat</div>
<div style="left:548.40px;top:1644.80px;width:3.2px;height:3.2px;border-radius:50%;background:#18181b"></div>
<div style="left:556.40px;top:1644.80px;width:3.2px;height:3.2px;border-radius:50%;background:#18181b"></div>
<div style="left:564.40px;top:1644.80px;width:3.2px;height:3.2px;border-radius:50%;background:#18181b"></div>
<div class="t" style="left:368.31px;top:1629.38px;font-family:'Liberation Mono', monospace;font-size:24.5px;line-height:24.5px;font-weight:400;color:#18181b;letter-spacing:0.000px;-webkit-text-stroke:0.3px #18181b;">{&quot;query&quot;:&quot;Ho </div>
<div style="left:787.40px;top:1644.80px;width:3.2px;height:3.2px;border-radius:50%;background:#18181b"></div>
<div style="left:795.40px;top:1644.80px;width:3.2px;height:3.2px;border-radius:50%;background:#18181b"></div>
<div style="left:803.40px;top:1644.80px;width:3.2px;height:3.2px;border-radius:50%;background:#18181b"></div>
<div class="t" style="left:607.30px;top:1629.38px;font-family:'Liberation Mono', monospace;font-size:24.5px;line-height:24.5px;font-weight:400;color:#18181b;letter-spacing:0.000px;-webkit-text-stroke:0.3px #18181b;">{&quot;op&quot;:&quot;post&quot; </div>
<div style="left:854.5px;top:1636.5px;width:14.5px;height:2px;background:#18181b"></div>
<div style="left:1094.8px;top:1636.5px;width:14.5px;height:2px;background:#18181b"></div>
<div style="left:1458px;top:1636.5px;width:15px;height:2px;background:#18181b"></div>
<div style="left:24px;top:1756px;width:1530px;height:2px;background:#f4f4f5"></div>
<div style="left:48.4px;top:1701.9px;width:31.199999999999996px;height:31.199999999999818px;border:2px solid #d4d4d8;border-radius:8px;background:#f4f4f5"></div>
<div style="left:128.2px;top:1701.9px;width:31.3px;height:31.3px;border:2px solid #67e8f9;background:#cffafe;border-radius:6.9px"></div>
<svg style="left:128.2px;top:1701.9px;width:31.3px;height:31.3px;stroke-linecap:butt" viewBox="0 0 31.3 31.3" fill="none" stroke="#1a6f85" stroke-width="1.7" stroke-linecap="round" stroke-linejoin="round"><path d="M12.9 7.4 Q3.1 15.6 12.9 23.8"/><path d="M18.6 7.4 Q28.0 15.6 18.6 23.8"/></svg>
<div class="t" style="left:174.72px;top:1704.71px;font-family:'Liberation Sans', sans-serif;font-size:27.4px;line-height:27.4px;font-weight:400;color:#09090b;letter-spacing:0.929px;-webkit-text-stroke:0.35px #09090b;">run_full_chat</div>
<div style="left:548.40px;top:1724.80px;width:3.2px;height:3.2px;border-radius:50%;background:#18181b"></div>
<div style="left:556.40px;top:1724.80px;width:3.2px;height:3.2px;border-radius:50%;background:#18181b"></div>
<div style="left:564.40px;top:1724.80px;width:3.2px;height:3.2px;border-radius:50%;background:#18181b"></div>
<div class="t" style="left:368.31px;top:1709.38px;font-family:'Liberation Mono', monospace;font-size:24.5px;line-height:24.5px;font-weight:400;color:#18181b;letter-spacing:0.000px;-webkit-text-stroke:0.3px #18181b;">{&quot;query&quot;:&quot;Su </div>
<div style="left:787.40px;top:1724.80px;width:3.2px;height:3.2px;border-radius:50%;background:#18181b"></div>
<div style="left:795.40px;top:1724.80px;width:3.2px;height:3.2px;border-radius:50%;background:#18181b"></div>
<div style="left:803.40px;top:1724.80px;width:3.2px;height:3.2px;border-radius:50%;background:#18181b"></div>
<div class="t" style="left:607.30px;top:1709.38px;font-family:'Liberation Mono', monospace;font-size:24.5px;line-height:24.5px;font-weight:400;color:#18181b;letter-spacing:0.000px;-webkit-text-stroke:0.3px #18181b;">{&quot;op&quot;:&quot;post&quot; </div>
<div style="left:854.5px;top:1716.5px;width:14.5px;height:2px;background:#18181b"></div>
<div style="left:1094.8px;top:1716.5px;width:14.5px;height:2px;background:#18181b"></div>
<div style="left:1458px;top:1716.5px;width:15px;height:2px;background:#18181b"></div>
<div style="left:24px;top:1836px;width:1530px;height:2px;background:#f4f4f5"></div>
<div style="left:48.4px;top:1781.9px;width:31.199999999999996px;height:31.199999999999818px;border:2px solid #d4d4d8;border-radius:8px;background:#f4f4f5"></div>
<div style="left:128.2px;top:1781.9px;width:31.3px;height:31.3px;border:2px solid #67e8f9;background:#cffafe;border-radius:6.9px"></div>
<svg style="left:128.2px;top:1781.9px;width:31.3px;height:31.3px;stroke-linecap:butt" viewBox="0 0 31.3 31.3" fill="none" stroke="#1a6f85" stroke-width="1.7" stroke-linecap="round" stroke-linejoin="round"><path d="M12.9 7.4 Q3.1 15.6 12.9 23.8"/><path d="M18.6 7.4 Q28.0 15.6 18.6 23.8"/></svg>
<div class="t" style="left:174.72px;top:1784.71px;font-family:'Liberation Sans', sans-serif;font-size:27.4px;line-height:27.4px;font-weight:400;color:#09090b;letter-spacing:0.929px;-webkit-text-stroke:0.35px #09090b;">run_full_chat</div>
<div style="left:548.40px;top:1804.80px;width:3.2px;height:3.2px;border-radius:50%;background:#18181b"></div>
<div style="left:556.40px;top:1804.80px;width:3.2px;height:3.2px;border-radius:50%;background:#18181b"></div>
<div style="left:564.40px;top:1804.80px;width:3.2px;height:3.2px;border-radius:50%;background:#18181b"></div>
<div class="t" style="left:368.31px;top:1789.38px;font-family:'Liberation Mono', monospace;font-size:24.5px;line-height:24.5px;font-weight:400;color:#18181b;letter-spacing:0.000px;-webkit-text-stroke:0.3px #18181b;">{&quot;query&quot;:&quot;ho </div>
<div style="left:787.40px;top:1804.80px;width:3.2px;height:3.2px;border-radius:50%;background:#18181b"></div>
<div style="left:795.40px;top:1804.80px;width:3.2px;height:3.2px;border-radius:50%;background:#18181b"></div>
<div style="left:803.40px;top:1804.80px;width:3.2px;height:3.2px;border-radius:50%;background:#18181b"></div>
<div class="t" style="left:607.30px;top:1789.38px;font-family:'Liberation Mono', monospace;font-size:24.5px;line-height:24.5px;font-weight:400;color:#18181b;letter-spacing:0.000px;-webkit-text-stroke:0.3px #18181b;">{&quot;op&quot;:&quot;get&quot;, </div>
<div style="left:854.5px;top:1796.5px;width:14.5px;height:2px;background:#18181b"></div>
<div style="left:1094.8px;top:1796.5px;width:14.5px;height:2px;background:#18181b"></div>
<div style="left:1458px;top:1796.5px;width:15px;height:2px;background:#18181b"></div>
<svg style="left:1588px;top:141px;width:24px;height:24px;" viewBox="0 0 24 24" fill="none" stroke="#3f3f46" stroke-width="2" stroke-linecap="round" stroke-linejoin="round"><path d="M3 7V5a2 2 0 0 1 2-2h2"/><path d="M17 3h2a2 2 0 0 1 2 2v2"/><path d="M21 17v2a2 2 0 0 1-2 2h-2"/><path d="M7 21H5a2 2 0 0 1-2-2v-2"/><rect x="7.5" y="7.5" width="9" height="9" rx="1"/></svg>
<svg style="left:1652px;top:141px;width:24px;height:24px;" viewBox="0 0 24 24" fill="none" stroke="#3f3f46" stroke-width="2" stroke-linecap="round" stroke-linejoin="round"><path d="m5 12 7-7 7 7"/><path d="M12 19V5"/></svg>
<svg style="left:1716px;top:141px;width:24px;height:24px;" viewBox="0 0 24 24" fill="none" stroke="#3f3f46" stroke-width="2" stroke-linecap="round" stroke-linejoin="round"><path d="M12 5v14"/><path d="m19 12-7 7-7-7"/></svg>
<div class="t" style="left:1771.27px;top:142.30px;font-family:'Liberation Mono', monospace;font-size:24.6px;line-height:24.6px;font-weight:400;color:#71717a;letter-spacing:0.127px;-webkit-text-stroke:0.3px #71717a;">4bf21e08-8efc-4ce7-bc9a-a7a51380637f</div>
<svg style="left:2730px;top:141px;width:24px;height:24px;" viewBox="0 0 24 24" fill="none" stroke="#3f3f46" stroke-width="2" stroke-linecap="round" stroke-linejoin="round"><path d="M12.586 2.586A2 2 0 0 0 11.172 2H4a2 2 0 0 0-2 2v7.172a2 2 0 0 0 .586 1.414l8.704 8.704a2.426 2.426 0 0 0 3.42 0l6.58-6.58a2.426 2.426 0 0 0 0-3.42z"/><circle cx="7.5" cy="7.5" r=".5" fill="currentColor"/></svg>
<svg style="left:2794px;top:141px;width:24px;height:24px;" viewBox="0 0 24 24" fill="none" stroke="#3f3f46" stroke-width="2" stroke-linecap="round" stroke-linejoin="round"><circle cx="11" cy="11" r="8"/><path d="m21 21-4.3-4.3"/></svg>
<div style="left:2843px;top:125.5px;width:54.19999999999982px;height:54.69999999999999px;border:2px solid #e4e4e7;border-radius:12px;background:#fff"></div>
<svg style="left:2858px;top:141px;width:24px;height:24px;" viewBox="0 0 24 24" fill="none" stroke="#3f3f46" stroke-width="2" stroke-linecap="round" stroke-linejoin="round"><path d="M18 6 6 18"/><path d="m6 6 12 12"/></svg>
<div style="left:1556px;top:196px;width:1362px;height:2px;background:#e4e4e7"></div>
<div style="left:1554px;top:110px;width:2px;height:1722px;background:#e4e4e7"></div>
<div style="left:1955px;top:198px;width:2px;height:1634px;background:#e4e4e7"></div>
<div class="t" style="left:1588.50px;top:237.92px;font-family:'Liberation Sans', sans-serif;font-size:24.8px;line-height:24.8px;font-weight:400;color:#18181b;letter-spacing:0.029px;-webkit-text-stroke:0.35px #18181b;">Trace</div>
<svg style="left:1755px;top:238px;width:24px;height:24px;" viewBox="0 0 24 24" fill="none" stroke="#3f3f46" stroke-width="2" stroke-linecap="round" stroke-linejoin="round"><path d="M10 2h4"/><path d="M12 14l3-3"/><circle cx="12" cy="14" r="8"/></svg>
<svg style="left:1819px;top:238px;width:24px;height:24px;" viewBox="0 0 24 24" fill="none" stroke="#3f3f46" stroke-width="2" stroke-linecap="round" stroke-linejoin="round"><path d="M12 22v-6"/><path d="M12 8V2"/><path d="M4 12H2"/><path d="M10 12H8"/><path d="M16 12h-2"/><path d="M22 12h-2"/><path d="m15 19-3-3-3 3"/><path d="m15 5-3 3-3-3"/></svg>
<svg style="left:1883px;top:238px;width:24px;height:24px;" viewBox="0 0 24 24" fill="none" stroke="#3f3f46" stroke-width="2" stroke-linecap="round" stroke-linejoin="round"><rect width="18" height="18" x="3" y="3" rx="2"/><path d="M9 3v18"/><path d="m16 15-3-3 3-3"/></svg>
<div style="left:1556px;top:301px;width:398px;height:2px;background:#e4e4e7"></div>
<div style="left:1556px;top:303px;width:398px;height:97px;background:#f4f4f5"></div>
<svg style="left:1595.4px;top:337.5px;width:17px;height:11px;" viewBox="0 0 17 11" fill="none" stroke="#18181b" stroke-width="2.2" stroke-linecap="round" stroke-linejoin="round"><path d="M2 2 L8.5 9 L15 2"/></svg>
<div style="left:1628px;top:327.3px;width:31.4px;height:31.4px;border:2px solid #67e8f9;background:#cffafe;border-radius:6.9px"></div>
<svg style="left:1628px;top:327.3px;width:31.4px;height:31.4px;stroke-linecap:butt" viewBox="0 0 31.3 31.3" fill="none" stroke="#1a6f85" stroke-width="1.7" stroke-linecap="round" stroke-linejoin="round"><path d="M12.9 7.4 Q3.1 15.6 12.9 23.8"/><path d="M18.6 7.4 Q28.0 15.6 18.6 23.8"/></svg>
<div class="t" style="left:1666.89px;top:331.52px;font-family:'Liberation Sans', sans-serif;font-size:24.8px;line-height:24.8px;font-weight:400;color:#18181b;letter-spacing:0.938px;-webkit-text-stroke:0.35px #18181b;">run_full_chat</div>
<div class="t" style="left:1859.51px;top:331.52px;font-family:'Liberation Sans', sans-serif;font-size:24.8px;line-height:24.8px;font-weight:400;color:#71717a;letter-spacing:0.831px;-webkit-text-stroke:0.35px #71717a;">0.84s</div>
<div style="left:1588.2px;top:382.09999999999997px;width:334.39999999999986px;height:3.4px;background:#67e8f9"></div>
<div style="left:1588.2px;top:377.7px;width:2.6px;height:12px;background:#67e8f9"></div>
<div style="left:1920.0px;top:377.7px;width:2.6px;height:12px;background:#67e8f9"></div>
<div style="left:1556px;top:494.0px;width:398px;height:2px;background:#f4f4f5"></div>
<svg style="left:1611.7px;top:433.5px;width:17px;height:11px;" viewBox="0 0 17 11" fill="none" stroke="#18181b" stroke-width="2.2" stroke-linecap="round" stroke-linejoin="round"><path d="M2 2 L8.5 9 L15 2"/></svg>
<div style="left:1644.2px;top:423.3px;width:31.4px;height:31.4px;border:2px solid #67e8f9;background:#cffafe;border-radius:6.9px"></div>
<svg style="left:1644.2px;top:423.3px;width:31.4px;height:31.4px;stroke-linecap:butt" viewBox="0 0 31.3 31.3" fill="none" stroke="#1a6f85" stroke-width="1.7" stroke-linecap="round" stroke-linejoin="round"><path d="M12.9 7.4 Q3.1 15.6 12.9 23.8"/><path d="M18.6 7.4 Q28.0 15.6 18.6 23.8"/></svg>
<div class="t" style="left:1683.09px;top:427.52px;font-family:'Liberation Sans', sans-serif;font-size:24.8px;line-height:24.8px;font-weight:400;color:#3f3f46;letter-spacing:0.898px;-webkit-text-stroke:0.35px #3f3f46;">perform_ch...</div>
<div class="t" style="left:1859.81px;top:427.52px;font-family:'Liberation Sans', sans-serif;font-size:24.8px;line-height:24.8px;font-weight:400;color:#71717a;letter-spacing:0.756px;-webkit-text-stroke:0.35px #71717a;">0.83s</div>
<div style="left:1591.3px;top:478.09999999999997px;width:331.4000000000001px;height:3.4px;background:#67e8f9"></div>
<div style="left:1591.3px;top:473.7px;width:2.6px;height:12px;background:#67e8f9"></div>
<div style="left:1920.1000000000001px;top:473.7px;width:2.6px;height:12px;background:#67e8f9"></div>
<div style="left:1556px;top:590.0px;width:398px;height:2px;background:#f4f4f5"></div>
<svg style="left:1660px;top:519.3px;width:31.4px;height:31.4px;stroke-dasharray:6 4.6;stroke-linecap:butt" viewBox="0 0 31.4 31.4" fill="none" stroke="#c4b5fd" stroke-width="2" stroke-linecap="round" stroke-linejoin="round"><rect x="1" y="1" width="29.4" height="29.4" rx="5" ry="5"/></svg>
<svg style="left:1666.0px;top:525.3px;width:19.5px;height:19.5px;" viewBox="0 0 24 24" fill="none" stroke="#6d28d9" stroke-width="2.3" stroke-linecap="round" stroke-linejoin="round"><path d="M7.9 20A9 9 0 1 0 4 16.1L2 22Z"/></svg>
<div class="t" style="left:1699.26px;top:523.52px;font-family:'Liberation Sans', sans-serif;font-size:24.8px;line-height:24.8px;font-weight:400;color:#3f3f46;letter-spacing:0.403px;-webkit-text-stroke:0.35px #3f3f46;">C...</div>
<div class="t" style="left:1759.61px;top:523.52px;font-family:'Liberation Sans', sans-serif;font-size:24.8px;line-height:24.8px;font-weight:400;color:#71717a;letter-spacing:0.558px;-webkit-text-stroke:0.35px #71717a;">0.30s, 252 tok</div>
<svg style="left:1592px;top:568.7px;width:123.40000000000009px;height:14px;stroke-linecap:butt" viewBox="0 0 123.40000000000009 14" fill="none" stroke="#c4b5fd" stroke-width="3.6" stroke-linecap="round" stroke-linejoin="round"><path d="M1 7 H122.40000000000009" stroke-dasharray="6.2 3.8"/><path d="M1 1.5 V12.5"/><path d="M122.40000000000009 1.5 V12.5"/></svg>
<div style="left:1556px;top:686.0px;width:398px;height:2px;background:#f4f4f5"></div>
<svg style="left:1627.6000000000001px;top:625.5px;width:17px;height:11px;" viewBox="0 0 17 11" fill="none" stroke="#18181b" stroke-width="2.2" stroke-linecap="round" stroke-linejoin="round"><path d="M2 2 L8.5 9 L15 2"/></svg>
<div style="left:1660px;top:615.3px;width:31.4px;height:31.4px;border:2px solid #67e8f9;background:#cffafe;border-radius:6.9px"></div>
<svg style="left:1660px;top:615.3px;width:31.4px;height:31.4px;stroke-linecap:butt" viewBox="0 0 31.3 31.3" fill="none" stroke="#1a6f85" stroke-width="1.7" stroke-linecap="round" stroke-linejoin="round"><path d="M12.9 7.4 Q3.1 15.6 12.9 23.8"/><path d="M18.6 7.4 Q28.0 15.6 18.6 23.8"/></svg>
<div class="t" style="left:1699.76px;top:619.52px;font-family:'Liberation Sans', sans-serif;font-size:24.8px;line-height:24.8px;font-weight:400;color:#3f3f46;letter-spacing:0.791px;-webkit-text-stroke:0.35px #3f3f46;">search</div>
<div class="t" style="left:1859.81px;top:619.52px;font-family:'Liberation Sans', sans-serif;font-size:24.8px;line-height:24.8px;font-weight:400;color:#71717a;letter-spacing:0.756px;-webkit-text-stroke:0.35px #71717a;">0.26s</div>
<div style="left:1718.6px;top:670.1px;width:103.60000000000014px;height:3.4px;background:#67e8f9"></div>
<div style="left:1718.6px;top:665.7px;width:2.6px;height:12px;background:#67e8f9"></div>
<div style="left:1819.6000000000001px;top:665.7px;width:2.6px;height:12px;background:#67e8f9"></div>
<div style="left:1556px;top:782.0px;width:398px;height:2px;background:#f4f4f5"></div>
<svg style="left:1676.3px;top:711.3px;width:31.4px;height:31.4px;stroke-dasharray:6 4.6;stroke-linecap:butt" viewBox="0 0 31.4 31.4" fill="none" stroke="#c4b5fd" stroke-width="2" stroke-linecap="round" stroke-linejoin="round"><rect x="1" y="1" width="29.4" height="29.4" rx="5" ry="5"/></svg>
<svg style="left:1682.3px;top:717.3px;width:19.5px;height:19.5px;" viewBox="0 0 24 24" fill="none" stroke="#6d28d9" stroke-width="2.3" stroke-linecap="round" stroke-linejoin="round"><path d="M7.9 20A9 9 0 1 0 4 16.1L2 22Z"/></svg>
<div class="t" style="left:1714.82px;top:715.52px;font-family:'Liberation Sans', sans-serif;font-size:24.8px;line-height:24.8px;font-weight:400;color:#3f3f46;letter-spacing:0.058px;-webkit-text-stroke:0.35px #3f3f46;">Em...</div>
<div class="t" style="left:1789.71px;top:715.52px;font-family:'Liberation Sans', sans-serif;font-size:24.8px;line-height:24.8px;font-weight:400;color:#71717a;letter-spacing:0.425px;-webkit-text-stroke:0.35px #71717a;">0.25s, 2 tok</div>
<svg style="left:1719.3px;top:760.7px;width:103.5px;height:14px;stroke-linecap:butt" viewBox="0 0 103.5 14" fill="none" stroke="#c4b5fd" stroke-width="3.6" stroke-linecap="round" stroke-linejoin="round"><path d="M1 7 H102.5" stroke-dasharray="6.2 3.8"/><path d="M1 1.5 V12.5"/><path d="M102.5 1.5 V12.5"/></svg>
<div style="left:1556px;top:878.0px;width:398px;height:2px;background:#f4f4f5"></div>
<svg style="left:1660px;top:807.3px;width:31.4px;height:31.4px;stroke-dasharray:6 4.6;stroke-linecap:butt" viewBox="0 0 31.4 31.4" fill="none" stroke="#c4b5fd" stroke-width="2" stroke-linecap="round" stroke-linejoin="round"><rect x="1" y="1" width="29.4" height="29.4" rx="5" ry="5"/></svg>
<svg style="left:1666.0px;top:813.3px;width:19.5px;height:19.5px;" viewBox="0 0 24 24" fill="none" stroke="#6d28d9" stroke-width="2.3" stroke-linecap="round" stroke-linejoin="round"><path d="M7.9 20A9 9 0 1 0 4 16.1L2 22Z"/></svg>
<div class="t" style="left:1699.26px;top:811.52px;font-family:'Liberation Sans', sans-serif;font-size:24.8px;line-height:24.8px;font-weight:400;color:#3f3f46;letter-spacing:0.403px;-webkit-text-stroke:0.35px #3f3f46;">C...</div>
<div class="t" style="left:1746.81px;top:811.52px;font-family:'Liberation Sans', sans-serif;font-size:24.8px;line-height:24.8px;font-weight:400;color:#71717a;letter-spacing:0.440px;-webkit-text-stroke:0.35px #71717a;">0.23s, 2272 tok</div>
<svg style="left:1828.4px;top:856.7px;width:95.29999999999995px;height:14px;stroke-linecap:butt" viewBox="0 0 95.29999999999995 14" fill="none" stroke="#c4b5fd" stroke-width="3.6" stroke-linecap="round" stroke-linejoin="round"><path d="M1 7 H94.29999999999995" stroke-dasharray="6.2 3.8"/><path d="M1 1.5 V12.5"/><path d="M94.29999999999995 1.5 V12.5"/></svg>
<div style="left:1556px;top:974.0px;width:398px;height:2px;background:#f4f4f5"></div>
<svg style="left:1612.4px;top:913.5px;width:17px;height:11px;" viewBox="0 0 17 11" fill="none" stroke="#18181b" stroke-width="2.2" stroke-linecap="round" stroke-linejoin="round"><path d="M2 2 L8.5 9 L15 2"/></svg>
<div style="left:1644px;top:903.3px;width:31.6px;height:31.6px;border:2px solid #6ee7b7;background:#d1fae5;border-radius:7px"></div>
<svg style="left:1649px;top:908.3px;width:21.6px;height:21.6px;" viewBox="0 0 22 22" fill="none" stroke="#115e59" stroke-width="1.7" stroke-linecap="round" stroke-linejoin="round"><circle cx="6" cy="5.5" r="2.2"/><circle cx="16" cy="16.5" r="2.2"/><path d="M17 4 L5 18"/></svg>
<div class="t" style="left:1682.89px;top:907.52px;font-family:'Liberation Sans', sans-serif;font-size:24.8px;line-height:24.8px;font-weight:400;color:#3f3f46;letter-spacing:0.840px;-webkit-text-stroke:0.35px #3f3f46;">no-hallucina...</div>
<div class="t" style="left:1861.46px;top:907.52px;font-family:'Liberation Sans', sans-serif;font-size:24.8px;line-height:24.8px;font-weight:400;color:#71717a;letter-spacing:0.343px;-webkit-text-stroke:0.35px #71717a;">2.75s</div>
<div style="left:1556px;top:1070.0px;width:398px;height:2px;background:#f4f4f5"></div>
<div style="left:1660.3px;top:999.3px;width:31.4px;height:31.4px;border:2px solid #c4b5fd;background:#ede9fe;border-radius:7px"></div>
<svg style="left:1666.3px;top:1005.3px;width:19.5px;height:19.5px;" viewBox="0 0 24 24" fill="none" stroke="#6d28d9" stroke-width="2.3" stroke-linecap="round" stroke-linejoin="round"><path d="M7.9 20A9 9 0 1 0 4 16.1L2 22Z"/></svg>
<div class="t" style="left:1699.56px;top:1003.52px;font-family:'Liberation Sans', sans-serif;font-size:24.8px;line-height:24.8px;font-weight:400;color:#3f3f46;letter-spacing:0.203px;-webkit-text-stroke:0.35px #3f3f46;">C...</div>
<div class="t" style="left:1749.16px;top:1003.52px;font-family:'Liberation Sans', sans-serif;font-size:24.8px;line-height:24.8px;font-weight:400;color:#71717a;letter-spacing:0.272px;-webkit-text-stroke:0.35px #71717a;">2.75s, 2184 tok</div>
<div style="left:1556px;top:1166.0px;width:398px;height:2px;background:#f4f4f5"></div>
<svg style="left:1612.4px;top:1105.5px;width:17px;height:11px;" viewBox="0 0 17 11" fill="none" stroke="#18181b" stroke-width="2.2" stroke-linecap="round" stroke-linejoin="round"><path d="M2 2 L8.5 9 L15 2"/></svg>
<div style="left:1644px;top:1095.3px;width:31.6px;height:31.6px;border:2px solid #6ee7b7;background:#d1fae5;border-radius:7px"></div>
<svg style="left:1649px;top:1100.3px;width:21.6px;height:21.6px;" viewBox="0 0 22 22" fill="none" stroke="#115e59" stroke-width="1.7" stroke-linecap="round" stroke-linejoin="round"><circle cx="6" cy="5.5" r="2.2"/><circle cx="16" cy="16.5" r="2.2"/><path d="M17 4 L5 18"/></svg>
<div class="t" style="left:1682.89px;top:1099.52px;font-family:'Liberation Sans', sans-serif;font-size:24.8px;line-height:24.8px;font-weight:400;color:#3f3f46;letter-spacing:0.916px;-webkit-text-stroke:0.35px #3f3f46;">no-hallucinat...</div>
<div class="t" style="left:1863.64px;top:1099.52px;font-family:'Liberation Sans', sans-serif;font-size:24.8px;line-height:24.8px;font-weight:400;color:#71717a;letter-spacing:-0.202px;-webkit-text-stroke:0.35px #71717a;">1.75s</div>
<div style="left:1556px;top:1262.0px;width:398px;height:2px;background:#f4f4f5"></div>
<div style="left:1660.3px;top:1191.3px;width:31.4px;height:31.4px;border:2px solid #c4b5fd;background:#ede9fe;border-radius:7px"></div>
<svg style="left:1666.3px;top:1197.3px;width:19.5px;height:19.5px;" viewBox="0 0 24 24" fill="none" stroke="#6d28d9" stroke-width="2.3" stroke-linecap="round" stroke-linejoin="round"><path d="M7.9 20A9 9 0 1 0 4 16.1L2 22Z"/></svg>
<div class="t" style="left:1699.56px;top:1195.52px;font-family:'Liberation Sans', sans-serif;font-size:24.8px;line-height:24.8px;font-weight:400;color:#3f3f46;letter-spacing:0.386px;-webkit-text-stroke:0.35px #3f3f46;">Ch...</div>
<div class="t" style="left:1760.44px;top:1195.52px;font-family:'Liberation Sans', sans-serif;font-size:24.8px;line-height:24.8px;font-weight:400;color:#71717a;letter-spacing:-0.268px;-webkit-text-stroke:0.35px #71717a;">1.72s, 2111 tok</div>
<div style="left:1556px;top:1358.0px;width:398px;height:2px;background:#f4f4f5"></div>
<svg style="left:1612.4px;top:1297.5px;width:17px;height:11px;" viewBox="0 0 17 11" fill="none" stroke="#18181b" stroke-width="2.2" stroke-linecap="round" stroke-linejoin="round"><path d="M2 2 L8.5 9 L15 2"/></svg>
<div style="left:1644px;top:1287.3px;width:31.6px;height:31.6px;border:2px solid #6ee7b7;background:#d1fae5;border-radius:7px"></div>
<svg style="left:1649px;top:1292.3px;width:21.6px;height:21.6px;" viewBox="0 0 22 22" fill="none" stroke="#115e59" stroke-width="1.7" stroke-linecap="round" stroke-linejoin="round"><circle cx="6" cy="5.5" r="2.2"/><circle cx="16" cy="16.5" r="2.2"/><path d="M17 4 L5 18"/></svg>
<div class="t" style="left:1682.89px;top:1291.52px;font-family:'Liberation Sans', sans-serif;font-size:24.8px;line-height:24.8px;font-weight:400;color:#3f3f46;letter-spacing:0.916px;-webkit-text-stroke:0.35px #3f3f46;">no-hallucinat...</div>
<div class="t" style="left:1863.64px;top:1291.52px;font-family:'Liberation Sans', sans-serif;font-size:24.8px;line-height:24.8px;font-weight:400;color:#71717a;letter-spacing:-0.202px;-webkit-text-stroke:0.35px #71717a;">1.74s</div>
<div style="left:1556px;top:1454.0px;width:398px;height:2px;background:#f4f4f5"></div>
<div style="left:1660.3px;top:1383.3px;width:31.4px;height:31.4px;border:2px solid #c4b5fd;background:#ede9fe;border-radius:7px"></div>
<svg style="left:1666.3px;top:1389.3px;width:19.5px;height:19.5px;" viewBox="0 0 24 24" fill="none" stroke="#6d28d9" stroke-width="2.3" stroke-linecap="round" stroke-linejoin="round"><path d="M7.9 20A9 9 0 1 0 4 16.1L2 22Z"/></svg>
<div class="t" style="left:1699.56px;top:1387.52px;font-family:'Liberation Sans', sans-serif;font-size:24.8px;line-height:24.8px;font-weight:400;color:#3f3f46;letter-spacing:0.203px;-webkit-text-stroke:0.35px #3f3f46;">C...</div>
<div class="t" style="left:1749.34px;top:1387.52px;font-family:'Liberation Sans', sans-serif;font-size:24.8px;line-height:24.8px;font-weight:400;color:#71717a;letter-spacing:0.259px;-webkit-text-stroke:0.35px #71717a;">1.69s, 2140 tok</div>
<div class="t" style="left:1988.88px;top:238.92px;font-family:'Liberation Sans', sans-serif;font-size:24.8px;line-height:24.8px;font-weight:400;color:#18181b;letter-spacing:0.207px;-webkit-text-stroke:0.35px #18181b;">Span</div>
<svg style="left:2612px;top:238px;width:24px;height:24px;" viewBox="0 0 24 24" fill="none" stroke="#3f3f46" stroke-width="2" stroke-linecap="round" stroke-linejoin="round"><path d="M12 22v-6"/><path d="M12 8V2"/><path d="M4 12H2"/><path d="M10 12H8"/><path d="M16 12h-2"/><path d="M22 12h-2"/><path d="m15 19-3 3-3-3"/><path d="m15 5-3-3-3 3"/></svg>
<div style="left:2661px;top:222.5px;width:236.19999999999982px;height:54.69999999999999px;border:2px solid #e4e4e7;border-radius:12px;background:#fff"></div>
<svg style="left:2678px;top:238.5px;width:24px;height:24px;" viewBox="0 0 24 24" fill="none" stroke="#3f3f46" stroke-width="2" stroke-linecap="round" stroke-linejoin="round"><ellipse cx="12" cy="5" rx="9" ry="3"/><path d="M3 5V19A9 3 0 0 0 21 19V5"/><path d="M3 12A9 3 0 0 0 21 12"/></svg>
<div class="t" style="left:2711.40px;top:238.22px;font-family:'Liberation Sans', sans-serif;font-size:24.8px;line-height:24.8px;font-weight:400;color:#3f3f46;letter-spacing:0.622px;-webkit-text-stroke:0.35px #3f3f46;">Add to dataset</div>
<div style="left:1989.4px;top:306.6px;width:47.2px;height:47.2px;border:2px solid #67e8f9;background:#cffafe;border-radius:11px"></div>
<svg style="left:1989.4px;top:306.6px;width:47.2px;height:47.2px;stroke-linecap:butt" viewBox="0 0 47.2 47.2" fill="none" stroke="#1e7490" stroke-width="2.8" stroke-linecap="round" stroke-linejoin="round"><path d="M19.1 10.3 Q4.6 23.6 19.1 36.9"/><path d="M28.3 10.3 Q42.8 23.6 28.3 36.9"/></svg>
<div class="t" style="left:2051.43px;top:312.78px;font-family:'Liberation Sans', sans-serif;font-size:36.5px;line-height:36.5px;font-weight:400;color:#09090b;letter-spacing:1.341px;-webkit-text-stroke:1.3px #09090b;">run_full_chat</div>
<div class="t" style="left:1988.28px;top:401.22px;font-family:'Liberation Sans', sans-serif;font-size:24.8px;line-height:24.8px;font-weight:400;color:#71717a;letter-spacing:0.653px;-webkit-text-stroke:0.35px #71717a;">Start</div>
<div class="t" style="left:1988.28px;top:441.42px;font-family:'Liberation Sans', sans-serif;font-size:24.8px;line-height:24.8px;font-weight:400;color:#18181b;letter-spacing:-0.170px;-webkit-text-stroke:0.35px #18181b;">Oct 16 11:58 AM</div>
<div class="t" style="left:2356.48px;top:401.22px;font-family:'Liberation Sans', sans-serif;font-size:24.8px;line-height:24.8px;font-weight:400;color:#71717a;letter-spacing:0.809px;-webkit-text-stroke:0.35px #71717a;">Offset</div>
<div class="t" style="left:2356.61px;top:441.42px;font-family:'Liberation Sans', sans-serif;font-size:24.8px;line-height:24.8px;font-weight:400;color:#18181b;letter-spacing:0.856px;-webkit-text-stroke:0.35px #18181b;">0.00s</div>
<div class="t" style="left:1987.42px;top:497.32px;font-family:'Liberation Sans', sans-serif;font-size:24.8px;line-height:24.8px;font-weight:400;color:#71717a;letter-spacing:0.722px;-webkit-text-stroke:0.35px #71717a;">Duration</div>
<div class="t" style="left:1988.41px;top:537.52px;font-family:'Liberation Sans', sans-serif;font-size:24.8px;line-height:24.8px;font-weight:400;color:#18181b;letter-spacing:1.056px;-webkit-text-stroke:0.35px #18181b;">0.84s</div>
<div style="left:1989px;top:614px;width:909px;height:2px;background:#f4f4f5"></div>
<div class="t" style="left:1988.28px;top:629.82px;font-family:'Liberation Sans', sans-serif;font-size:24.8px;line-height:24.8px;font-weight:400;color:#3f3f46;letter-spacing:0.631px;-webkit-text-stroke:0.5px #3f3f46;">Scores</div>
<svg style="left:2874px;top:630.4px;width:24px;height:24px;" viewBox="0 0 24 24" fill="none" stroke="#71717a" stroke-width="1.6" stroke-linecap="round" stroke-linejoin="round"><path d="m6 9 6 6 6-6"/></svg>
<div class="t" style="left:1987.42px;top:681.42px;font-family:'Liberation Sans', sans-serif;font-size:24.8px;line-height:24.8px;font-weight:400;color:#71717a;letter-spacing:0.516px;-webkit-text-stroke:0.35px #71717a;">No hallucination</div>
<div class="t" style="left:1987.88px;top:722.28px;font-family:'Liberation Sans', sans-serif;font-size:30.5px;line-height:30.5px;font-weight:400;color:#18181b;letter-spacing:0.889px;-webkit-text-stroke:0.75px #18181b;">25.00%</div>
<div style="left:1989px;top:798px;width:833px;height:2px;background:#f4f4f5"></div>
<div class="t" style="left:1987.42px;top:814.82px;font-family:'Liberation Sans', sans-serif;font-size:24.8px;line-height:24.8px;font-weight:400;color:#3f3f46;letter-spacing:0.572px;-webkit-text-stroke:0.5px #3f3f46;">Human review</div>
<svg style="left:2797px;top:814.6px;width:24px;height:24px;" viewBox="0 0 24 24" fill="none" stroke="#71717a" stroke-width="1.6" stroke-linecap="round" stroke-linejoin="round"><path d="m6 9 6 6 6-6"/></svg>
<div style="left:2838.9px;top:799px;width:58.40000000000009px;height:53.799999999999955px;border:2px solid #e4e4e7;border-radius:12px;background:#fff"></div>
<svg style="left:2856px;top:814px;width:24px;height:24px;" viewBox="0 0 24 24" fill="none" stroke="#3f3f46" stroke-width="1.8" stroke-linecap="round" stroke-linejoin="round"><path d="M15 3h6v6"/><path d="M9 21H3v-6"/><path d="M21 3l-7 7"/><path d="M3 21l7-7"/></svg>
<div class="t" style="left:1987.17px;top:865.62px;font-family:'Liberation Sans', sans-serif;font-size:24.8px;line-height:24.8px;font-weight:400;color:#71717a;letter-spacing:0.458px;-webkit-text-stroke:0.35px #71717a;">Internal review</div>
<svg style="left:2005px;top:930px;width:24px;height:24px;" viewBox="0 0 24 24" fill="none" stroke="#09090b" stroke-width="2" stroke-linecap="round" stroke-linejoin="round"><path d="M7 10v12"/><path d="M15 5.88 14 10h5.83a2 2 0 0 1 1.92 2.56l-2.33 8A2 2 0 0 1 17.5 22H4a2 2 0 0 1-2-2v-8a2 2 0 0 1 2-2h2.76a2 2 0 0 0 1.79-1.11L12 2a3.13 3.13 0 0 1 3 3.88Z"/></svg>
<svg style="left:2069.5px;top:930px;width:24px;height:24px;" viewBox="0 0 24 24" fill="none" stroke="#09090b" stroke-width="2" stroke-linecap="round" stroke-linejoin="round"><path d="M17 14V2"/><path d="M9 18.12 10 14H4.17a2 2 0 0 1-1.92-2.56l2.33-8A2 2 0 0 1 6.5 2H20a2 2 0 0 1 2 2v8a2 2 0 0 1-2 2h-2.76a2 2 0 0 0-1.79 1.11L12 22a3.13 3.13 0 0 1-3-3.88Z"/></svg>
<div style="left:1989px;top:1014px;width:909px;height:2px;background:#f4f4f5"></div>
<div class="t" style="left:1987.37px;top:1031.22px;font-family:'Liberation Sans', sans-serif;font-size:24.8px;line-height:24.8px;font-weight:400;color:#3f3f46;letter-spacing:1.275px;-webkit-text-stroke:0.5px #3f3f46;">Input</div>
<svg style="left:2874px;top:1030.4px;width:24px;height:24px;" viewBox="0 0 24 24" fill="none" stroke="#71717a" stroke-width="1.6" stroke-linecap="round" stroke-linejoin="round"><path d="m6 9 6 6 6-6"/></svg>
<div style="left:1989.6px;top:1086.4px;width:124.80000000000018px;height:38.799999999999955px;border:2px solid #e4e4e7;border-radius:8px;background:#fff"></div>
<div class="t" style="left:2003.98px;top:1094.12px;font-family:'Liberation Sans', sans-serif;font-size:24.8px;line-height:24.8px;font-weight:400;color:#3f3f46;letter-spacing:-0.219px;-webkit-text-stroke:0.35px #3f3f46;">YAML</div>
<svg style="left:2081.0px;top:1101.0px;width:16px;height:10px;" viewBox="0 0 16 10" fill="none" stroke="#71717a" stroke-width="1.8" stroke-linecap="round" stroke-linejoin="round"><path d="M2 2 L8.0 8 L14 2"/></svg>
<div class="t" style="left:2008.17px;top:1156.73px;font-family:'Liberation Mono', monospace;font-size:24.7px;line-height:24.7px;font-weight:400;color:#a1a1aa;letter-spacing:0.000px;-webkit-text-stroke:0.3px #a1a1aa;">1</div>
<div class="t" style="left:2072.10px;top:1156.73px;font-family:'Liberation Mono', monospace;font-size:24.7px;line-height:24.7px;color:#6d28d9;white-space:pre;-webkit-text-stroke:0.3px #6d28d9">query</div>
<div class="t" style="left:2146.20px;top:1156.73px;font-family:'Liberation Mono', monospace;font-size:24.7px;line-height:24.7px;color:#18181b;white-space:pre;-webkit-text-stroke:0.3px #18181b">: How do I download a specific dataset?</div>
<div style="left:1989px;top:1223.5px;width:909px;height:2px;background:#f4f4f5"></div>
<div class="t" style="left:1988.48px;top:1241.32px;font-family:'Liberation Sans', sans-serif;font-size:24.8px;line-height:24.8px;font-weight:400;color:#3f3f46;letter-spacing:0.888px;-webkit-text-stroke:0.5px #3f3f46;">Output</div>
<svg style="left:2874px;top:1241px;width:24px;height:24px;" viewBox="0 0 24 24" fill="none" stroke="#71717a" stroke-width="1.6" stroke-linecap="round" stroke-linejoin="round"><path d="m6 9 6 6 6-6"/></svg>
<div style="left:1989.6px;top:1297.1px;width:124.80000000000018px;height:38.0px;border:2px solid #e4e4e7;border-radius:8px;background:#fff"></div>
<div class="t" style="left:2003.98px;top:1304.82px;font-family:'Liberation Sans', sans-serif;font-size:24.8px;line-height:24.8px;font-weight:400;color:#3f3f46;letter-spacing:-0.219px;-webkit-text-stroke:0.35px #3f3f46;">YAML</div>
<svg style="left:2081.0px;top:1311.5px;width:16px;height:10px;" viewBox="0 0 16 10" fill="none" stroke="#71717a" stroke-width="1.8" stroke-linecap="round" stroke-linejoin="round"><path d="M2 2 L8.0 8 L14 2"/></svg>
<div class="t" style="left:2008.17px;top:1367.43px;font-family:'Liberation Mono', monospace;font-size:24.7px;line-height:24.7px;font-weight:400;color:#a1a1aa;letter-spacing:0.000px;-webkit-text-stroke:0.3px #a1a1aa;">1</div>
<div class="t" style="left:2072.10px;top:1367.43px;font-family:'Liberation Mono', monospace;font-size:24.7px;line-height:24.7px;color:#6d28d9;white-space:pre;-webkit-text-stroke:0.3px #6d28d9">op</div>
<div class="t" style="left:2101.74px;top:1367.43px;font-family:'Liberation Mono', monospace;font-size:24.7px;line-height:24.7px;color:#18181b;white-space:pre;-webkit-text-stroke:0.3px #18181b">: get</div>
<div class="t" style="left:2008.17px;top:1400.63px;font-family:'Liberation Mono', monospace;font-size:24.7px;line-height:24.7px;font-weight:400;color:#a1a1aa;letter-spacing:0.000px;-webkit-text-stroke:0.3px #a1a1aa;">2</div>
<div class="t" style="left:2072.10px;top:1400.63px;font-family:'Liberation Mono', monospace;font-size:24.7px;line-height:24.7px;color:#6d28d9;white-space:pre;-webkit-text-stroke:0.3px #6d28d9">path</div>
<div class="t" style="left:2131.38px;top:1400.63px;font-family:'Liberation Mono', monospace;font-size:24.7px;line-height:24.7px;color:#18181b;white-space:pre;-webkit-text-stroke:0.3px #18181b">: /v1/dataset/{dataset_id}</div>
<div class="t" style="left:2008.29px;top:1433.83px;font-family:'Liberation Mono', monospace;font-size:24.7px;line-height:24.7px;font-weight:400;color:#a1a1aa;letter-spacing:0.000px;-webkit-text-stroke:0.3px #a1a1aa;">3</div>
<div class="t" style="left:2072.10px;top:1433.83px;font-family:'Liberation Mono', monospace;font-size:24.7px;line-height:24.7px;color:#6d28d9;white-space:pre;-webkit-text-stroke:0.3px #6d28d9">parameters</div>
<div class="t" style="left:2220.30px;top:1433.83px;font-family:'Liberation Mono', monospace;font-size:24.7px;line-height:24.7px;color:#18181b;white-space:pre;-webkit-text-stroke:0.3px #18181b">:</div>
<div class="t" style="left:2008.67px;top:1467.03px;font-family:'Liberation Mono', monospace;font-size:24.7px;line-height:24.7px;font-weight:400;color:#a1a1aa;letter-spacing:0.000px;-webkit-text-stroke:0.3px #a1a1aa;">4</div>
<div class="t" style="left:2101.74px;top:1467.03px;font-family:'Liberation Mono', monospace;font-size:24.7px;line-height:24.7px;color:#6d28d9;white-space:pre;-webkit-text-stroke:0.3px #6d28d9">dataset_id</div>
<div class="t" style="left:2249.94px;top:1467.03px;font-family:'Liberation Mono', monospace;font-size:24.7px;line-height:24.7px;color:#18181b;white-space:pre;-webkit-text-stroke:0.3px #18181b">: your_dataset_id</div>
<svg style="left:2032.0px;top:1440.0px;width:13px;height:9px;" viewBox="0 0 13 9" fill="none" stroke="#a1a1aa" stroke-width="1.6" stroke-linecap="round" stroke-linejoin="round"><path d="M2 2 L6.5 7 L11 2"/></svg>
<div style="left:2073px;top:1461px;width:2px;height:32px;background:#d4d4d8"></div>
<div style="left:1989px;top:1534px;width:909px;height:2px;background:#f4f4f5"></div>
<div class="t" style="left:1987.62px;top:1551.12px;font-family:'Liberation Sans', sans-serif;font-size:24.8px;line-height:24.8px;font-weight:400;color:#3f3f46;letter-spacing:0.911px;-webkit-text-stroke:0.5px #3f3f46;">Expected</div>
<svg style="left:2874px;top:1550.3px;width:24px;height:24px;" viewBox="0 0 24 24" fill="none" stroke="#71717a" stroke-width="1.6" stroke-linecap="round" stroke-linejoin="round"><path d="m6 9 6 6 6-6"/></svg>
<div style="left:1989.6px;top:1598.6px;width:906.8px;height:123.8px;border:2px solid #e4e4e7;background:#fafafa;border-radius:12px"></div>
<div style="left:1999.5px;top:1609px;width:107.30000000000018px;height:38px;border:2px solid #e4e4e7;border-radius:8px;background:#fff"></div>
<div class="t" style="left:2013.90px;top:1615.42px;font-family:'Liberation Sans', sans-serif;font-size:24.8px;line-height:24.8px;font-weight:400;color:#3f3f46;letter-spacing:0.645px;-webkit-text-stroke:0.35px #3f3f46;">Text</div>
<svg style="left:2074.0px;top:1622.5px;width:16px;height:10px;" viewBox="0 0 16 10" fill="none" stroke="#71717a" stroke-width="1.8" stroke-linecap="round" stroke-linejoin="round"><path d="M2 2 L8.0 8 L14 2"/></svg>
<div class="t" style="left:2010.64px;top:1676.62px;font-family:'Liberation Sans', sans-serif;font-size:24.8px;line-height:24.8px;font-weight:400;color:#a1a1aa;letter-spacing:0.000px;-webkit-text-stroke:0.35px #a1a1aa;">1</div>
<div class="t" style="left:2066.32px;top:1676.62px;font-family:'Liberation Sans', sans-serif;font-size:24.8px;line-height:24.8px;font-weight:400;color:#71717a;letter-spacing:0.301px;-webkit-text-stroke:0.35px #71717a;">Enter value</div>
<div style="left:1989px;top:1747.5px;width:909px;height:2px;background:#f4f4f5"></div>
<div class="t" style="left:1987.62px;top:1764.62px;font-family:'Liberation Sans', sans-serif;font-size:24.8px;line-height:24.8px;font-weight:400;color:#3f3f46;letter-spacing:0.838px;-webkit-text-stroke:0.5px #3f3f46;">Metadata</div>
<div style="left:2842.4px;top:1746.6px;width:54.0px;height:54.0px;border:2px solid #e4e4e7;border-radius:12px;background:#fff"></div>
<svg style="left:2858px;top:1762px;width:24px;height:24px;" viewBox="0 0 24 24" fill="none" stroke="#3f3f46" stroke-width="1.8" stroke-linecap="round" stroke-linejoin="round"><path d="M4 6h16"/><path d="M4 12h16"/><path d="M4 18h16"/></svg>
<div style="left:1989.6px;top:1819.8px;width:124.80000000000018px;height:40.200000000000045px;border:2px solid #e4e4e7;border-radius:8px;background:#fff"></div>
</body></html>
